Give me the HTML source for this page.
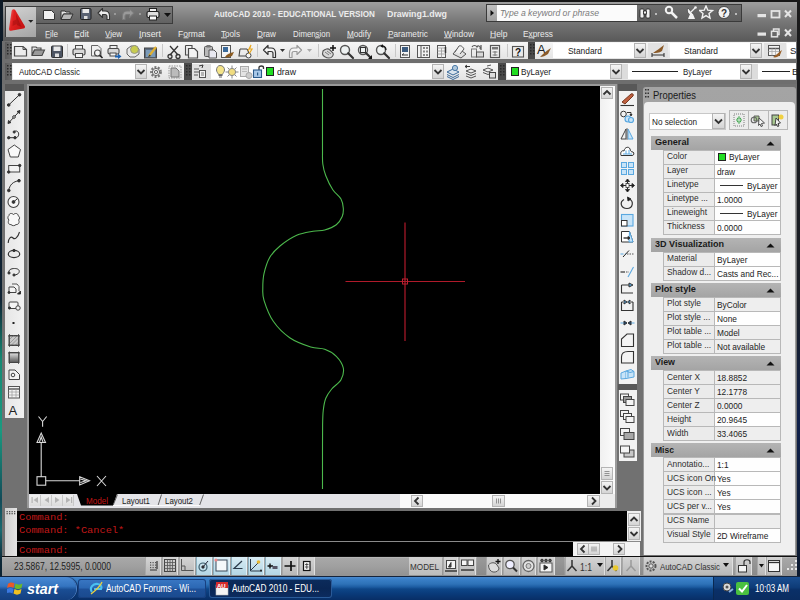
<!DOCTYPE html><html><head><meta charset="utf-8"><style>
*{margin:0;padding:0;box-sizing:border-box}
html,body{width:800px;height:600px;overflow:hidden;background:#6a6a6a;font-family:"Liberation Sans",sans-serif;font-size:11px;color:#000}
.a{position:absolute}
.t{white-space:nowrap;line-height:1}
.tb{background:linear-gradient(#f6f6f6,#e4e4e4)}
.grip{background:#5a5a5a}
</style></head><body><div class="a " style="left:0px;top:0px;width:800px;height:600px;background:#6a6a6a"></div>
<div class="a " style="left:0px;top:0px;width:800px;height:24px;background:linear-gradient(#4a4a4a,#5a5a5a)"></div>
<div class="a " style="left:0px;top:24px;width:800px;height:17px;background:linear-gradient(#5c5c5c,#4c4c4c)"></div>
<div class="a " style="left:0px;top:0px;width:800px;height:2px;background:#161616"></div>
<div class="a " style="left:0px;top:0px;width:2px;height:600px;background:#0f2233"></div>
<div class="a " style="left:0px;top:0px;width:800px;height:41px;background:linear-gradient(#161616 0,#161616 2px,#9e9e9e 2px,#8a8a8a 12px,#767676 22px,#6a6a6a 30px,#5a5a5a 41px)"></div>
<div class="a " style="left:0px;top:0px;width:2.5px;height:600px;background:linear-gradient(#0e1a26 0,#0f2233 300px,#168a74 360px,#1a9a80 430px,#124a58 500px,#1a6a70 530px,#0c2838 560px,#0a1a28 600px)"></div>
<div class="a " style="left:5px;top:6px;width:31px;height:31px;background:linear-gradient(160deg,#d2d2d2,#bcbcbc 50%,#a4a4a4);border:1px solid #3a3a3a;border-width:1px 0 0 1px"></div>
<svg class="a" style="left:0px;top:0px;" width="40" height="40" viewBox="0 0 40 40"><defs><linearGradient id="ra" x1="0" y1="0" x2="1" y2="0.3"><stop offset="0" stop-color="#f06a6a"/><stop offset="0.35" stop-color="#e02020"/><stop offset="1" stop-color="#c81414"/></linearGradient></defs><path d="M13.5 9.2 C12.5 9.2 12 10 11.6 11 L9 28.5 C8.8 30.5 9.8 31 11 30.8 L23.5 28.6 C25 28.3 25.5 27.2 24.6 25.8 L15.2 10 C14.8 9.4 14.2 9.2 13.5 9.2 Z" fill="url(#ra)"/><path d="M16 14 L21.5 27 L17 25 Z" fill="#a81010" opacity="0.8"/><path d="M13 21 L17.5 19 L18 23.5 L12.5 26 Z" fill="#b81515" opacity="0.9"/><path d="M28.2 20 H33.4 L30.8 22.8 Z" fill="#222"/></svg>
<div class="a " style="left:36px;top:6px;width:137px;height:18px;background:linear-gradient(#7a7a7a,#626262);border:1px solid #3c3c3c;border-left:none"></div>
<div class="a t" style="left:213.5px;top:10px;color:#ececec;font-size:9px;font-weight:bold;transform:scaleX(0.9035);transform-origin:0 0;">AutoCAD 2010 - EDUCATIONAL VERSION</div>
<div class="a t" style="left:387px;top:10px;color:#ececec;font-size:9px;font-weight:bold;transform:scaleX(0.9834);transform-origin:0 0;">Drawing1.dwg</div>
<div class="a " style="left:486px;top:4px;width:256px;height:18px;background:linear-gradient(#6e6e6e,#5e5e5e);border:1px solid #3a3a3a"></div>
<div class="a " style="left:487px;top:5px;width:10px;height:16px;background:linear-gradient(#c0c0c0,#9e9e9e)"></div>
<svg class="a" style="left:487px;top:5px;" width="10" height="16" viewBox="0 0 10 16"><path d="M3.5 5 L7 8 L3.5 11 Z" fill="#111"/></svg>
<div class="a " style="left:497px;top:5px;width:140px;height:16px;background:#fbfbfb"></div>
<div class="a t" style="left:500px;top:8px;color:#7a7a7a;font-style:italic;font-size:9.5px;transform:scaleX(0.9072);transform-origin:0 0;">Type a keyword or phrase</div>
<div class="a t" style="left:45px;top:30px;color:#eaeaea;font-size:9px;transform:scaleX(0.8956);transform-origin:0 0;">File</div>
<div class="a t" style="left:74px;top:30px;color:#eaeaea;font-size:9px;transform:scaleX(0.9668);transform-origin:0 0;">Edit</div>
<div class="a t" style="left:105px;top:30px;color:#eaeaea;font-size:9px;transform:scaleX(0.8781);transform-origin:0 0;">View</div>
<div class="a t" style="left:139px;top:30px;color:#eaeaea;font-size:9px;transform:scaleX(0.9771);transform-origin:0 0;">Insert</div>
<div class="a t" style="left:177.5px;top:30px;color:#eaeaea;font-size:9px;transform:scaleX(0.9468);transform-origin:0 0;">Format</div>
<div class="a t" style="left:221px;top:30px;color:#eaeaea;font-size:9px;transform:scaleX(0.9041);transform-origin:0 0;">Tools</div>
<div class="a t" style="left:257px;top:30px;color:#eaeaea;font-size:9px;transform:scaleX(0.9041);transform-origin:0 0;">Draw</div>
<div class="a t" style="left:293px;top:30px;color:#eaeaea;font-size:9px;transform:scaleX(0.8699);transform-origin:0 0;">Dimension</div>
<div class="a t" style="left:347px;top:30px;color:#eaeaea;font-size:9px;transform:scaleX(0.9051);transform-origin:0 0;">Modify</div>
<div class="a t" style="left:387.5px;top:30px;color:#eaeaea;font-size:9px;transform:scaleX(0.9192);transform-origin:0 0;">Parametric</div>
<div class="a t" style="left:443.5px;top:30px;color:#eaeaea;font-size:9px;transform:scaleX(0.9370);transform-origin:0 0;">Window</div>
<div class="a t" style="left:490px;top:30px;color:#eaeaea;font-size:9px;transform:scaleX(0.9451);transform-origin:0 0;">Help</div>
<div class="a t" style="left:522.5px;top:30px;color:#eaeaea;font-size:9px;transform:scaleX(0.9226);transform-origin:0 0;">Express</div>
<div class="a " style="left:2px;top:41px;width:795px;height:43px;background:#6e6e6e"></div>
<div class="a " style="left:5px;top:42px;width:7px;height:17px;background:linear-gradient(90deg,#5a5a5a,#6e6e6e)"></div>
<div class="a tb" style="left:12px;top:42px;width:516px;height:17px;"></div>
<div class="a " style="left:528px;top:42px;width:7px;height:17px;background:#4a4a4a"></div>
<div class="a tb" style="left:535px;top:42px;width:261px;height:17px;"></div>
<div class="a " style="left:553px;top:43px;width:93px;height:15px;background:#fff"></div>
<div class="a " style="left:634px;top:43px;width:12px;height:15px;background:linear-gradient(#f4f4f4,#d4d4d4);border:1px solid #b4b4b4"></div>
<svg class="a" style="left:634px;top:43px;" width="12" height="15" viewBox="0 0 12 15"><path d="M2.5 6.0 L6.0 9.5 L9.5 6.0" fill="none" stroke="#333" stroke-width="1.8"/></svg>
<div class="a t" style="left:568px;top:45.5px;font-size:9.5px;color:#222;transform:scaleX(0.8817);transform-origin:0 0;">Standard</div>
<div class="a " style="left:648px;top:43px;width:20px;height:15px;background:#e2e2e2"></div>
<div class="a " style="left:670px;top:43px;width:92px;height:15px;background:#fff"></div>
<div class="a " style="left:750px;top:43px;width:12px;height:15px;background:linear-gradient(#f4f4f4,#d4d4d4);border:1px solid #b4b4b4"></div>
<svg class="a" style="left:750px;top:43px;" width="12" height="15" viewBox="0 0 12 15"><path d="M2.5 6.0 L6.0 9.5 L9.5 6.0" fill="none" stroke="#333" stroke-width="1.8"/></svg>
<div class="a t" style="left:684px;top:45.5px;font-size:9.5px;color:#222;transform:scaleX(0.8817);transform-origin:0 0;">Standard</div>
<div class="a " style="left:764px;top:43px;width:22px;height:15px;background:#e2e2e2"></div>
<div class="a " style="left:787px;top:43px;width:9px;height:15px;background:#fff"></div>
<div class="a t" style="left:790px;top:45.5px;font-size:9.5px;color:#222;">S</div>
<div class="a " style="left:5px;top:63px;width:7px;height:17px;background:linear-gradient(90deg,#5a5a5a,#6e6e6e)"></div>
<div class="a tb" style="left:12px;top:63px;width:135px;height:17px;"></div>
<div class="a " style="left:13px;top:64px;width:122px;height:15px;background:#fff"></div>
<div class="a " style="left:135px;top:64px;width:12px;height:15px;background:linear-gradient(#f4f4f4,#d4d4d4);border:1px solid #b4b4b4"></div>
<svg class="a" style="left:135px;top:64px;" width="12" height="15" viewBox="0 0 12 15"><path d="M2.5 6.0 L6.0 9.5 L9.5 6.0" fill="none" stroke="#333" stroke-width="1.8"/></svg>
<div class="a t" style="left:19px;top:66.5px;font-size:9.5px;color:#222;transform:scaleX(0.8372);transform-origin:0 0;">AutoCAD Classic</div>
<div class="a tb" style="left:147px;top:63px;width:37px;height:17px;"></div>
<div class="a " style="left:184px;top:63px;width:8px;height:17px;background:#4a4a4a"></div>
<div class="a tb" style="left:192px;top:63px;width:306px;height:17px;"></div>
<div class="a " style="left:192px;top:64px;width:19px;height:15px;background:#e0e0e0"></div>
<div class="a " style="left:211px;top:64px;width:233px;height:15px;background:#fff"></div>
<div class="a " style="left:432px;top:64px;width:12px;height:15px;background:linear-gradient(#f4f4f4,#d4d4d4);border:1px solid #b4b4b4"></div>
<svg class="a" style="left:432px;top:64px;" width="12" height="15" viewBox="0 0 12 15"><path d="M2.5 6.0 L6.0 9.5 L9.5 6.0" fill="none" stroke="#333" stroke-width="1.8"/></svg>
<div class="a " style="left:265.5px;top:67px;width:8px;height:9px;background:#22dd22;border:1px solid #222"></div>
<div class="a t" style="left:277px;top:66.5px;font-size:9.5px;color:#222;transform:scaleX(0.9226);transform-origin:0 0;">draw</div>
<div class="a " style="left:498px;top:63px;width:8px;height:17px;background:#4a4a4a"></div>
<div class="a tb" style="left:506px;top:63px;width:290px;height:17px;"></div>
<div class="a " style="left:507px;top:64px;width:115px;height:15px;background:#fff"></div>
<div class="a " style="left:610px;top:64px;width:12px;height:15px;background:linear-gradient(#f4f4f4,#d4d4d4);border:1px solid #b4b4b4"></div>
<svg class="a" style="left:610px;top:64px;" width="12" height="15" viewBox="0 0 12 15"><path d="M2.5 6.0 L6.0 9.5 L9.5 6.0" fill="none" stroke="#333" stroke-width="1.8"/></svg>
<div class="a " style="left:511px;top:67px;width:8px;height:9px;background:#22dd22;border:1px solid #222"></div>
<div class="a t" style="left:521px;top:66.5px;font-size:9.5px;color:#222;transform:scaleX(0.8606);transform-origin:0 0;">ByLayer</div>
<div class="a " style="left:622px;top:64px;width:6px;height:15px;background:#dcdcdc"></div>
<div class="a " style="left:628px;top:64px;width:124px;height:15px;background:#fff"></div>
<div class="a " style="left:740px;top:64px;width:12px;height:15px;background:linear-gradient(#f4f4f4,#d4d4d4);border:1px solid #b4b4b4"></div>
<svg class="a" style="left:740px;top:64px;" width="12" height="15" viewBox="0 0 12 15"><path d="M2.5 6.0 L6.0 9.5 L9.5 6.0" fill="none" stroke="#333" stroke-width="1.8"/></svg>
<div class="a " style="left:632px;top:71px;width:46px;height:1px;background:#222"></div>
<div class="a t" style="left:683px;top:66.5px;font-size:9.5px;color:#222;transform:scaleX(0.8319);transform-origin:0 0;">ByLayer</div>
<div class="a " style="left:752px;top:64px;width:6px;height:15px;background:#dcdcdc"></div>
<div class="a " style="left:758px;top:64px;width:38px;height:15px;background:#fff"></div>
<div class="a " style="left:762px;top:71px;width:28px;height:1px;background:#222"></div>
<div class="a t" style="left:792px;top:66.5px;font-size:9.5px;color:#222;">B</div>
<div class="a " style="left:2px;top:84px;width:795px;height:472px;background:#717171"></div>
<div class="a " style="left:27px;top:84px;width:590px;height:426px;background:#9a9a9a"></div>
<div class="a " style="left:29px;top:86px;width:571px;height:408px;background:#000"></div>
<div class="a " style="left:600px;top:86px;width:15px;height:408px;background:linear-gradient(90deg,#f0f0f0,#fcfcfc)"></div>
<div class="a " style="left:601px;top:87px;width:12px;height:12px;background:linear-gradient(#f4f4f4,#d4d4d4);border:1px solid #b4b4b4"></div>
<svg class="a" style="left:601px;top:87px;" width="12" height="12" viewBox="0 0 12 12"><path d="M2.5 7.5 L6.0 4.0 L9.5 7.5" fill="none" stroke="#333" stroke-width="1.8"/></svg>
<div class="a " style="left:601px;top:467px;width:12px;height:13px;background:linear-gradient(#f4f4f4,#d4d4d4);border:1px solid #b4b4b4"></div>
<svg class="a" style="left:601px;top:467px;" width="12" height="13" viewBox="0 0 12 13"><path d="M3.5 4.5 H8.5 M3.5 6.5 H8.5 M3.5 8.5 H8.5" stroke="#888" stroke-width="0.9"/></svg>
<div class="a " style="left:601px;top:481px;width:12px;height:13px;background:linear-gradient(#f4f4f4,#d4d4d4);border:1px solid #b4b4b4"></div>
<svg class="a" style="left:601px;top:481px;" width="12" height="13" viewBox="0 0 12 13"><path d="M2.5 5.0 L6.0 8.5 L9.5 5.0" fill="none" stroke="#333" stroke-width="1.8"/></svg>
<div class="a " style="left:29px;top:494px;width:586px;height:14px;background:#e4e4e8"></div>
<div class="a " style="left:400px;top:494px;width:200px;height:14px;background:#fafafa"></div>
<div class="a " style="left:411px;top:495px;width:12px;height:12px;background:linear-gradient(#f4f4f4,#d4d4d4);border:1px solid #b4b4b4"></div>
<svg class="a" style="left:411px;top:495px;" width="12" height="12" viewBox="0 0 12 12"><path d="M7.5 2.5 L4 6 L7.5 9.5" fill="none" stroke="#333" stroke-width="1.8"/></svg>
<div class="a " style="left:492px;top:495px;width:13px;height:12px;background:linear-gradient(#f4f4f4,#d4d4d4);border:1px solid #b4b4b4"></div>
<svg class="a" style="left:492px;top:495px;" width="13" height="12" viewBox="0 0 13 12"><path d="M4.5 3.5 V8.5 M6.5 3.5 V8.5 M8.5 3.5 V8.5" stroke="#888" stroke-width="0.9"/></svg>
<div class="a " style="left:587px;top:495px;width:13px;height:12px;background:linear-gradient(#f4f4f4,#d4d4d4);border:1px solid #b4b4b4"></div>
<svg class="a" style="left:587px;top:495px;" width="13" height="12" viewBox="0 0 13 12"><path d="M5 2.5 L8.5 6 L5 9.5" fill="none" stroke="#333" stroke-width="1.8"/></svg>
<div class="a " style="left:600px;top:494px;width:15px;height:14px;background:#ececec"></div>
<div class="a " style="left:2px;top:508px;width:795px;height:48px;background:#717171"></div>
<div class="a " style="left:5px;top:84px;width:19px;height:7px;background:#585858"></div>
<div class="a " style="left:5px;top:91px;width:19px;height:327px;background:linear-gradient(90deg,#e6e6e6,#f2f2f2)"></div>
<div class="a " style="left:618px;top:84px;width:19px;height:7px;background:#585858"></div>
<div class="a " style="left:619px;top:91px;width:18px;height:292.5px;background:#f2f2f2"></div>
<div class="a " style="left:618px;top:383.5px;width:19px;height:6px;background:#585858"></div>
<div class="a " style="left:619px;top:389.5px;width:18px;height:71px;background:#f2f2f2"></div>
<div class="a " style="left:643px;top:87px;width:153px;height:468px;background:linear-gradient(#a4a4a4,#969696);border-radius:3px 3px 0 0"></div>
<div class="a " style="left:644px;top:102px;width:151px;height:453px;background:#efefef;border-radius:4px 4px 0 0"></div>
<svg class="a" style="left:645px;top:89px;" width="4" height="9" viewBox="0 0 4 9"><g fill="#333"><rect x="0" y="0" width="1.5" height="1.5"/><rect x="2.5" y="0" width="1.5" height="1.5"/><rect x="0" y="3.5" width="1.5" height="1.5"/><rect x="2.5" y="3.5" width="1.5" height="1.5"/><rect x="0" y="7" width="1.5" height="1.5"/><rect x="2.5" y="7" width="1.5" height="1.5"/></g></svg>
<div class="a t" style="left:653px;top:90.5px;font-size:10px;color:#1a1a1a;transform:scaleX(0.9434);transform-origin:0 0;">Properties</div>
<div class="a " style="left:649px;top:112.5px;width:77px;height:17px;background:#fff;border:1px solid #c8c8c8"></div>
<div class="a t" style="left:652px;top:116.5px;font-size:9.5px;color:#222;transform:scaleX(0.8607);transform-origin:0 0;">No selection</div>
<div class="a " style="left:712px;top:113px;width:13px;height:16px;background:linear-gradient(#f4f4f4,#d4d4d4);border:1px solid #b4b4b4"></div>
<svg class="a" style="left:712px;top:113px;" width="13" height="16" viewBox="0 0 13 16"><path d="M3.0 6.5 L6.5 10.0 L10.0 6.5" fill="none" stroke="#333" stroke-width="1.8"/></svg>
<div class="a " style="left:729px;top:110px;width:59px;height:20px;background:#ececec;border:1px solid #b8b8b8"></div>
<div class="a " style="left:748px;top:110px;width:1px;height:20px;background:#b8b8b8"></div>
<div class="a " style="left:768px;top:110px;width:1px;height:20px;background:#b8b8b8"></div>
<div class="a " style="left:651px;top:135.5px;width:130px;height:14px;background:linear-gradient(#b4b4b4,#a4a4a4)"></div>
<div class="a t" style="left:654.5px;top:136.7px;font-size:9.5px;font-weight:bold;color:#1a1a1a;transform:scaleX(0.9607);transform-origin:0 0;">General</div>
<svg class="a" style="left:766px;top:140.5px;" width="9" height="5" viewBox="0 0 9 5"><path d="M0.5 4.5 L4.5 0.5 L8.5 4.5 Z" fill="#111"/></svg>
<div class="a " style="left:651px;top:135.5px;width:130px;height:14px;background:linear-gradient(#b4b4b4,#a4a4a4)"></div>
<div class="a t" style="left:654.5px;top:136.7px;font-size:9.5px;font-weight:bold;color:#1a1a1a;transform:scaleX(0.9607);transform-origin:0 0;">General</div>
<svg class="a" style="left:766px;top:140.5px;" width="9" height="5" viewBox="0 0 9 5"><path d="M0.5 4.5 L4.5 0.5 L8.5 4.5 Z" fill="#111"/></svg>
<div class="a " style="left:663px;top:149.5px;width:118px;height:15.05px;background:#b8b8b8"></div>
<div class="a " style="left:664px;top:150.5px;width:50px;height:13.05px;background:#ebebeb"></div>
<div class="a " style="left:715px;top:150.5px;width:65px;height:13.05px;background:#fefefe"></div>
<div class="a t" style="left:667px;top:151.0px;font-size:9.5px;color:#2e2e2e;transform:scaleX(0.88);transform-origin:0 0;">Color</div>
<div class="a " style="left:717.5px;top:152.5px;width:8px;height:8px;background:#22dd22;border:1px solid #222"></div>
<div class="a t" style="left:729px;top:152.3px;font-size:9.5px;color:#222;transform:scaleX(0.875);transform-origin:0 0;">ByLayer</div>
<div class="a " style="left:663px;top:163.55px;width:118px;height:15.05px;background:#b8b8b8"></div>
<div class="a " style="left:664px;top:164.55px;width:50px;height:13.05px;background:#ebebeb"></div>
<div class="a " style="left:715px;top:164.55px;width:65px;height:13.05px;background:#fefefe"></div>
<div class="a t" style="left:667px;top:165.05px;font-size:9.5px;color:#2e2e2e;transform:scaleX(0.88);transform-origin:0 0;">Layer</div>
<div class="a t" style="left:716.5px;top:166.55px;font-size:9.5px;color:#222;transform:scaleX(0.875);transform-origin:0 0;">draw</div>
<div class="a " style="left:663px;top:177.60000000000002px;width:118px;height:15.05px;background:#b8b8b8"></div>
<div class="a " style="left:664px;top:178.60000000000002px;width:50px;height:13.05px;background:#ebebeb"></div>
<div class="a " style="left:715px;top:178.60000000000002px;width:65px;height:13.05px;background:#fefefe"></div>
<div class="a t" style="left:667px;top:179.10000000000002px;font-size:9.5px;color:#2e2e2e;transform:scaleX(0.88);transform-origin:0 0;">Linetype</div>
<div class="a " style="left:719.5px;top:184.60000000000002px;width:23px;height:1px;background:#333"></div>
<div class="a t" style="left:747px;top:180.60000000000002px;font-size:9.5px;color:#222;transform:scaleX(0.875);transform-origin:0 0;">ByLayer</div>
<div class="a " style="left:663px;top:191.65000000000003px;width:118px;height:15.05px;background:#b8b8b8"></div>
<div class="a " style="left:664px;top:192.65000000000003px;width:50px;height:13.05px;background:#ebebeb"></div>
<div class="a " style="left:715px;top:192.65000000000003px;width:65px;height:13.05px;background:#fefefe"></div>
<div class="a t" style="left:667px;top:193.15000000000003px;font-size:9.5px;color:#2e2e2e;transform:scaleX(0.88);transform-origin:0 0;">Linetype ...</div>
<div class="a t" style="left:716.5px;top:194.65000000000003px;font-size:9.5px;color:#222;transform:scaleX(0.875);transform-origin:0 0;">1.0000</div>
<div class="a " style="left:663px;top:205.70000000000005px;width:118px;height:15.05px;background:#b8b8b8"></div>
<div class="a " style="left:664px;top:206.70000000000005px;width:50px;height:13.05px;background:#ebebeb"></div>
<div class="a " style="left:715px;top:206.70000000000005px;width:65px;height:13.05px;background:#fefefe"></div>
<div class="a t" style="left:667px;top:207.20000000000005px;font-size:9.5px;color:#2e2e2e;transform:scaleX(0.88);transform-origin:0 0;">Lineweight</div>
<div class="a " style="left:719.5px;top:212.70000000000005px;width:23px;height:1px;background:#333"></div>
<div class="a t" style="left:747px;top:208.70000000000005px;font-size:9.5px;color:#222;transform:scaleX(0.875);transform-origin:0 0;">ByLayer</div>
<div class="a " style="left:663px;top:219.75000000000006px;width:118px;height:15.05px;background:#b8b8b8"></div>
<div class="a " style="left:664px;top:220.75000000000006px;width:50px;height:13.05px;background:#ebebeb"></div>
<div class="a " style="left:715px;top:220.75000000000006px;width:65px;height:13.05px;background:#fefefe"></div>
<div class="a t" style="left:667px;top:221.25000000000006px;font-size:9.5px;color:#2e2e2e;transform:scaleX(0.88);transform-origin:0 0;">Thickness</div>
<div class="a t" style="left:716.5px;top:222.75000000000006px;font-size:9.5px;color:#222;transform:scaleX(0.875);transform-origin:0 0;">0.0000</div>
<div class="a " style="left:651px;top:237.5px;width:130px;height:14px;background:linear-gradient(#b4b4b4,#a4a4a4)"></div>
<div class="a t" style="left:654.5px;top:238.7px;font-size:9.5px;font-weight:bold;color:#1a1a1a;transform:scaleX(0.9493);transform-origin:0 0;">3D Visualization</div>
<svg class="a" style="left:766px;top:242.5px;" width="9" height="5" viewBox="0 0 9 5"><path d="M0.5 4.5 L4.5 0.5 L8.5 4.5 Z" fill="#111"/></svg>
<div class="a " style="left:663px;top:251.5px;width:118px;height:15.05px;background:#b8b8b8"></div>
<div class="a " style="left:664px;top:252.5px;width:50px;height:13.05px;background:#ebebeb"></div>
<div class="a " style="left:715px;top:252.5px;width:65px;height:13.05px;background:#fefefe"></div>
<div class="a t" style="left:667px;top:253.0px;font-size:9.5px;color:#2e2e2e;transform:scaleX(0.88);transform-origin:0 0;">Material</div>
<div class="a t" style="left:716.5px;top:254.5px;font-size:9.5px;color:#222;transform:scaleX(0.875);transform-origin:0 0;">ByLayer</div>
<div class="a " style="left:663px;top:265.55px;width:118px;height:15.05px;background:#b8b8b8"></div>
<div class="a " style="left:664px;top:266.55px;width:50px;height:13.05px;background:#ebebeb"></div>
<div class="a " style="left:715px;top:266.55px;width:65px;height:13.05px;background:#fefefe"></div>
<div class="a t" style="left:667px;top:267.05px;font-size:9.5px;color:#2e2e2e;transform:scaleX(0.88);transform-origin:0 0;">Shadow d...</div>
<div class="a t" style="left:716.5px;top:268.55px;font-size:9.5px;color:#222;transform:scaleX(0.875);transform-origin:0 0;">Casts and Rec...</div>
<div class="a " style="left:651px;top:282.5px;width:130px;height:14px;background:linear-gradient(#b4b4b4,#a4a4a4)"></div>
<div class="a t" style="left:654.5px;top:283.7px;font-size:9.5px;font-weight:bold;color:#1a1a1a;transform:scaleX(0.9704);transform-origin:0 0;">Plot style</div>
<svg class="a" style="left:766px;top:287.5px;" width="9" height="5" viewBox="0 0 9 5"><path d="M0.5 4.5 L4.5 0.5 L8.5 4.5 Z" fill="#111"/></svg>
<div class="a " style="left:663px;top:296.5px;width:118px;height:15.05px;background:#b8b8b8"></div>
<div class="a " style="left:664px;top:297.5px;width:50px;height:13.05px;background:#ebebeb"></div>
<div class="a " style="left:715px;top:297.5px;width:65px;height:13.05px;background:#eeeeee"></div>
<div class="a t" style="left:667px;top:298.0px;font-size:9.5px;color:#2e2e2e;transform:scaleX(0.88);transform-origin:0 0;">Plot style</div>
<div class="a t" style="left:716.5px;top:299.5px;font-size:9.5px;color:#222;transform:scaleX(0.875);transform-origin:0 0;">ByColor</div>
<div class="a " style="left:663px;top:310.55px;width:118px;height:15.05px;background:#b8b8b8"></div>
<div class="a " style="left:664px;top:311.55px;width:50px;height:13.05px;background:#ebebeb"></div>
<div class="a " style="left:715px;top:311.55px;width:65px;height:13.05px;background:#fefefe"></div>
<div class="a t" style="left:667px;top:312.05px;font-size:9.5px;color:#2e2e2e;transform:scaleX(0.88);transform-origin:0 0;">Plot style ...</div>
<div class="a t" style="left:716.5px;top:313.55px;font-size:9.5px;color:#222;transform:scaleX(0.875);transform-origin:0 0;">None</div>
<div class="a " style="left:663px;top:324.6px;width:118px;height:15.05px;background:#b8b8b8"></div>
<div class="a " style="left:664px;top:325.6px;width:50px;height:13.05px;background:#ebebeb"></div>
<div class="a " style="left:715px;top:325.6px;width:65px;height:13.05px;background:#eeeeee"></div>
<div class="a t" style="left:667px;top:326.1px;font-size:9.5px;color:#2e2e2e;transform:scaleX(0.88);transform-origin:0 0;">Plot table ...</div>
<div class="a t" style="left:716.5px;top:327.6px;font-size:9.5px;color:#222;transform:scaleX(0.875);transform-origin:0 0;">Model</div>
<div class="a " style="left:663px;top:338.65000000000003px;width:118px;height:15.05px;background:#b8b8b8"></div>
<div class="a " style="left:664px;top:339.65000000000003px;width:50px;height:13.05px;background:#ebebeb"></div>
<div class="a " style="left:715px;top:339.65000000000003px;width:65px;height:13.05px;background:#eeeeee"></div>
<div class="a t" style="left:667px;top:340.15000000000003px;font-size:9.5px;color:#2e2e2e;transform:scaleX(0.88);transform-origin:0 0;">Plot table ...</div>
<div class="a t" style="left:716.5px;top:341.65000000000003px;font-size:9.5px;color:#222;transform:scaleX(0.875);transform-origin:0 0;">Not available</div>
<div class="a " style="left:651px;top:356px;width:130px;height:14px;background:linear-gradient(#b4b4b4,#a4a4a4)"></div>
<div class="a t" style="left:654.5px;top:357.2px;font-size:9.5px;font-weight:bold;color:#1a1a1a;transform:scaleX(0.9309);transform-origin:0 0;">View</div>
<svg class="a" style="left:766px;top:361px;" width="9" height="5" viewBox="0 0 9 5"><path d="M0.5 4.5 L4.5 0.5 L8.5 4.5 Z" fill="#111"/></svg>
<div class="a " style="left:663px;top:370px;width:118px;height:15.1px;background:#b8b8b8"></div>
<div class="a " style="left:664px;top:371px;width:50px;height:13.1px;background:#ebebeb"></div>
<div class="a " style="left:715px;top:371px;width:65px;height:13.1px;background:#eeeeee"></div>
<div class="a t" style="left:667px;top:371.5px;font-size:9.5px;color:#2e2e2e;transform:scaleX(0.88);transform-origin:0 0;">Center X</div>
<div class="a t" style="left:716.5px;top:373px;font-size:9.5px;color:#222;transform:scaleX(0.875);transform-origin:0 0;">18.8852</div>
<div class="a " style="left:663px;top:384.1px;width:118px;height:15.1px;background:#b8b8b8"></div>
<div class="a " style="left:664px;top:385.1px;width:50px;height:13.1px;background:#ebebeb"></div>
<div class="a " style="left:715px;top:385.1px;width:65px;height:13.1px;background:#eeeeee"></div>
<div class="a t" style="left:667px;top:385.6px;font-size:9.5px;color:#2e2e2e;transform:scaleX(0.88);transform-origin:0 0;">Center Y</div>
<div class="a t" style="left:716.5px;top:387.1px;font-size:9.5px;color:#222;transform:scaleX(0.875);transform-origin:0 0;">12.1778</div>
<div class="a " style="left:663px;top:398.20000000000005px;width:118px;height:15.1px;background:#b8b8b8"></div>
<div class="a " style="left:664px;top:399.20000000000005px;width:50px;height:13.1px;background:#ebebeb"></div>
<div class="a " style="left:715px;top:399.20000000000005px;width:65px;height:13.1px;background:#eeeeee"></div>
<div class="a t" style="left:667px;top:399.70000000000005px;font-size:9.5px;color:#2e2e2e;transform:scaleX(0.88);transform-origin:0 0;">Center Z</div>
<div class="a t" style="left:716.5px;top:401.20000000000005px;font-size:9.5px;color:#222;transform:scaleX(0.875);transform-origin:0 0;">0.0000</div>
<div class="a " style="left:663px;top:412.30000000000007px;width:118px;height:15.1px;background:#b8b8b8"></div>
<div class="a " style="left:664px;top:413.30000000000007px;width:50px;height:13.1px;background:#ebebeb"></div>
<div class="a " style="left:715px;top:413.30000000000007px;width:65px;height:13.1px;background:#fefefe"></div>
<div class="a t" style="left:667px;top:413.80000000000007px;font-size:9.5px;color:#2e2e2e;transform:scaleX(0.88);transform-origin:0 0;">Height</div>
<div class="a t" style="left:716.5px;top:415.30000000000007px;font-size:9.5px;color:#222;transform:scaleX(0.875);transform-origin:0 0;">20.9645</div>
<div class="a " style="left:663px;top:426.4000000000001px;width:118px;height:15.1px;background:#b8b8b8"></div>
<div class="a " style="left:664px;top:427.4000000000001px;width:50px;height:13.1px;background:#ebebeb"></div>
<div class="a " style="left:715px;top:427.4000000000001px;width:65px;height:13.1px;background:#eeeeee"></div>
<div class="a t" style="left:667px;top:427.9000000000001px;font-size:9.5px;color:#2e2e2e;transform:scaleX(0.88);transform-origin:0 0;">Width</div>
<div class="a t" style="left:716.5px;top:429.4000000000001px;font-size:9.5px;color:#222;transform:scaleX(0.875);transform-origin:0 0;">33.4065</div>
<div class="a " style="left:651px;top:443.3px;width:130px;height:14px;background:linear-gradient(#b4b4b4,#a4a4a4)"></div>
<div class="a t" style="left:654.5px;top:444.5px;font-size:9.5px;font-weight:bold;color:#1a1a1a;transform:scaleX(0.8994);transform-origin:0 0;">Misc</div>
<svg class="a" style="left:766px;top:448.3px;" width="9" height="5" viewBox="0 0 9 5"><path d="M0.5 4.5 L4.5 0.5 L8.5 4.5 Z" fill="#111"/></svg>
<div class="a " style="left:663px;top:457.3px;width:118px;height:15.05px;background:#b8b8b8"></div>
<div class="a " style="left:664px;top:458.3px;width:50px;height:13.05px;background:#ebebeb"></div>
<div class="a " style="left:715px;top:458.3px;width:65px;height:13.05px;background:#fefefe"></div>
<div class="a t" style="left:667px;top:458.8px;font-size:9.5px;color:#2e2e2e;transform:scaleX(0.88);transform-origin:0 0;">Annotatio...</div>
<div class="a t" style="left:716.5px;top:460.3px;font-size:9.5px;color:#222;transform:scaleX(0.875);transform-origin:0 0;">1:1</div>
<div class="a " style="left:663px;top:471.35px;width:118px;height:15.05px;background:#b8b8b8"></div>
<div class="a " style="left:664px;top:472.35px;width:50px;height:13.05px;background:#ebebeb"></div>
<div class="a " style="left:715px;top:472.35px;width:65px;height:13.05px;background:#fefefe"></div>
<div class="a t" style="left:667px;top:472.85px;font-size:9.5px;color:#2e2e2e;transform:scaleX(0.88);transform-origin:0 0;">UCS icon On</div>
<div class="a t" style="left:716.5px;top:474.35px;font-size:9.5px;color:#222;transform:scaleX(0.875);transform-origin:0 0;">Yes</div>
<div class="a " style="left:663px;top:485.40000000000003px;width:118px;height:15.05px;background:#b8b8b8"></div>
<div class="a " style="left:664px;top:486.40000000000003px;width:50px;height:13.05px;background:#ebebeb"></div>
<div class="a " style="left:715px;top:486.40000000000003px;width:65px;height:13.05px;background:#fefefe"></div>
<div class="a t" style="left:667px;top:486.90000000000003px;font-size:9.5px;color:#2e2e2e;transform:scaleX(0.88);transform-origin:0 0;">UCS icon ...</div>
<div class="a t" style="left:716.5px;top:488.40000000000003px;font-size:9.5px;color:#222;transform:scaleX(0.875);transform-origin:0 0;">Yes</div>
<div class="a " style="left:663px;top:499.45000000000005px;width:118px;height:15.05px;background:#b8b8b8"></div>
<div class="a " style="left:664px;top:500.45000000000005px;width:50px;height:13.05px;background:#ebebeb"></div>
<div class="a " style="left:715px;top:500.45000000000005px;width:65px;height:13.05px;background:#fefefe"></div>
<div class="a t" style="left:667px;top:500.95000000000005px;font-size:9.5px;color:#2e2e2e;transform:scaleX(0.88);transform-origin:0 0;">UCS per v...</div>
<div class="a t" style="left:716.5px;top:502.45000000000005px;font-size:9.5px;color:#222;transform:scaleX(0.875);transform-origin:0 0;">Yes</div>
<div class="a " style="left:663px;top:513.5px;width:118px;height:15.05px;background:#b8b8b8"></div>
<div class="a " style="left:664px;top:514.5px;width:50px;height:13.05px;background:#ebebeb"></div>
<div class="a " style="left:715px;top:514.5px;width:65px;height:13.05px;background:#eeeeee"></div>
<div class="a t" style="left:667px;top:515.0px;font-size:9.5px;color:#2e2e2e;transform:scaleX(0.88);transform-origin:0 0;">UCS Name</div>
<div class="a " style="left:663px;top:527.55px;width:118px;height:15.05px;background:#b8b8b8"></div>
<div class="a " style="left:664px;top:528.55px;width:50px;height:13.05px;background:#ebebeb"></div>
<div class="a " style="left:715px;top:528.55px;width:65px;height:13.05px;background:#fefefe"></div>
<div class="a t" style="left:667px;top:529.05px;font-size:9.5px;color:#2e2e2e;transform:scaleX(0.88);transform-origin:0 0;">Visual Style</div>
<div class="a t" style="left:716.5px;top:530.55px;font-size:9.5px;color:#222;transform:scaleX(0.875);transform-origin:0 0;">2D Wireframe</div>
<div class="a " style="left:5px;top:508px;width:12px;height:48px;background:linear-gradient(90deg,#cfcfcf,#e4e4e4)"></div>
<svg class="a" style="left:5px;top:510px;" width="12" height="5" viewBox="0 0 12 5"><g fill="#555"><rect x="1.5" y="1" width="1.3" height="1.3"/><rect x="4" y="1" width="1.3" height="1.3"/><rect x="6.5" y="1" width="1.3" height="1.3"/><rect x="9" y="1" width="1.3" height="1.3"/><rect x="1.5" y="3" width="1.3" height="1.3"/><rect x="4" y="3" width="1.3" height="1.3"/><rect x="6.5" y="3" width="1.3" height="1.3"/><rect x="9" y="3" width="1.3" height="1.3"/></g></svg>
<div class="a " style="left:17px;top:511px;width:610px;height:30px;background:#000"></div>
<div class="a " style="left:17px;top:541px;width:623px;height:1px;background:#8a8a8a"></div>
<div class="a " style="left:17px;top:542px;width:556px;height:14px;background:#000"></div>
<div class="a " style="left:573px;top:542px;width:67px;height:14px;background:#f4f4f4"></div>
<div class="a " style="left:627px;top:511px;width:14px;height:30px;background:#efefef"></div>
<div class="a " style="left:628px;top:513px;width:12px;height:13px;background:linear-gradient(#f4f4f4,#d4d4d4);border:1px solid #b4b4b4"></div>
<svg class="a" style="left:628px;top:513px;" width="12" height="13" viewBox="0 0 12 13"><path d="M2.5 8.0 L6.0 4.5 L9.5 8.0" fill="none" stroke="#333" stroke-width="1.8"/></svg>
<div class="a " style="left:628px;top:527px;width:12px;height:13px;background:linear-gradient(#f4f4f4,#d4d4d4);border:1px solid #b4b4b4"></div>
<svg class="a" style="left:628px;top:527px;" width="12" height="13" viewBox="0 0 12 13"><path d="M2.5 5.0 L6.0 8.5 L9.5 5.0" fill="none" stroke="#333" stroke-width="1.8"/></svg>
<div class="a " style="left:577px;top:543px;width:12px;height:12px;background:linear-gradient(#f4f4f4,#d4d4d4);border:1px solid #b4b4b4"></div>
<svg class="a" style="left:577px;top:543px;" width="12" height="12" viewBox="0 0 12 12"><path d="M7.5 2.5 L4 6 L7.5 9.5" fill="none" stroke="#333" stroke-width="1.8"/></svg>
<div class="a " style="left:588px;top:543px;width:12px;height:12px;background:linear-gradient(#f4f4f4,#d4d4d4);border:1px solid #b4b4b4"></div>
<svg class="a" style="left:588px;top:543px;" width="12" height="12" viewBox="0 0 12 12"><path d="M4 3.5 V8.5 M6 3.5 V8.5 M8 3.5 V8.5" stroke="#888" stroke-width="0.9"/></svg>
<div class="a " style="left:613px;top:543px;width:12px;height:12px;background:linear-gradient(#f4f4f4,#d4d4d4);border:1px solid #b4b4b4"></div>
<svg class="a" style="left:613px;top:543px;" width="12" height="12" viewBox="0 0 12 12"><path d="M5 2.5 L8.5 6 L5 9.5" fill="none" stroke="#333" stroke-width="1.8"/></svg>
<div class="a t" style="left:18.5px;top:513px;font-family:'Liberation Mono',monospace;font-size:9.6px;color:#c01818;transform:scaleX(1.075);transform-origin:0 0;">Command:</div>
<div class="a t" style="left:18.5px;top:526px;font-family:'Liberation Mono',monospace;font-size:9.6px;color:#c01818;transform:scaleX(1.075);transform-origin:0 0;">Command: *Cancel*</div>
<div class="a t" style="left:18.5px;top:546.3px;font-family:'Liberation Mono',monospace;font-size:9.6px;color:#c01818;transform:scaleX(1.075);transform-origin:0 0;">Command:</div>
<div class="a " style="left:2px;top:556px;width:795px;height:20px;background:linear-gradient(#101010 0,#101010 0.5px,#c4c4c4 1px,#a8a8a8 2px,#a0a0a0 50%,#929292)"></div>
<div class="a t" style="left:14px;top:562px;font-size:10px;color:#222;transform:scaleX(0.85);transform-origin:0 0;">23.5867, 12.5995, 0.0000</div>
<svg class="a" style="left:0px;top:0px;" width="800" height="600" viewBox="0 0 800 600"><path d="M322.5 89 C322.50 94.17 322.50 109.83 322.5 120 C322.50 130.17 322.45 142.67 322.5 150 C322.55 157.33 322.25 159.72 322.8 164 C323.35 168.28 324.13 171.42 325.8 175.7 C327.47 179.98 330.27 185.82 332.8 189.7 C335.33 193.58 339.25 195.90 341 199 C342.75 202.10 343.10 205.38 343.3 208.3 C343.50 211.22 343.37 213.77 342.2 216.5 C341.03 219.23 339.22 222.45 336.3 224.7 C333.38 226.95 328.58 228.92 324.7 230 C320.82 231.08 317.67 230.33 313 231.2 C308.33 232.07 302.15 232.78 296.7 235.2 C291.25 237.62 284.78 242.02 280.3 245.7 C275.82 249.38 272.52 252.63 269.8 257.3 C267.08 261.97 265.17 268.58 264 273.7 C262.83 278.82 262.80 283.57 262.8 288 C262.80 292.43 262.25 294.75 264 300.3 C265.75 305.85 269.02 315.07 273.3 321.3 C277.58 327.53 283.47 333.42 289.7 337.7 C295.93 341.98 304.87 345.07 310.7 347 C316.53 348.93 320.43 347.75 324.7 349.3 C328.97 350.85 333.20 353.18 336.3 356.3 C339.40 359.42 342.52 364.10 343.3 368 C344.08 371.90 342.93 376.20 341 379.7 C339.07 383.20 334.23 385.90 331.7 389 C329.17 392.10 327.20 394.80 325.8 398.3 C324.40 401.80 323.83 405.55 323.3 410 C322.77 414.45 322.73 416.67 322.6 425 C322.47 433.33 322.52 449.33 322.5 460 C322.48 470.67 322.50 484.17 322.5 489" fill="none" stroke="#4cb84c" stroke-width="1.1"/><path d="M405 222.5 V341 M345.5 281.5 H465" stroke="#b01a2a" stroke-width="1.2" fill="none"/><rect x="402.5" y="279" width="5" height="5" fill="none" stroke="#c02030" stroke-width="1"/><g stroke="#d8d8d8" stroke-width="1.1" fill="none"><path d="M41.2 442.5 V476.7 M45.7 480.7 H79.7"/><rect x="37" y="476.7" width="8.7" height="8.5"/><path d="M37 442.5 L41.2 433 L45.5 442.5 Z M39.5 442 L41.2 437 L43 442"/><path d="M79.7 476.7 L89.5 480.7 L79.7 485 Z M80.5 479 L86 480.7 L80.5 482.5"/><path d="M38.5 416.5 L42.6 421.5 L46.7 416.5 M42.6 421.5 V426.7"/><path d="M97 476 L106 486 M106 476 L97 486"/></g></svg>
<svg class="a" style="left:12.5px;top:42.5px;" width="16" height="16" viewBox="0 0 16 16"><path d="M1.5 3.5 H10 L13.5 6.5 V13 H1.5 Z" fill="#ececec" stroke="#4a4a4a" stroke-width="1.2"/><path d="M10 3.5 V6.5 H13.5" fill="none" stroke="#4a4a4a" stroke-width="1"/></svg>
<svg class="a" style="left:31px;top:42.5px;" width="16" height="16" viewBox="0 0 16 16"><path d="M1 4 H5 L6 5 H10 V7 H3.5 L1 12 Z" fill="#e4e4e4" stroke="#4a4a4a" stroke-width="1.1"/><path d="M1 12.5 L3.5 7 H13.5 L11 12.5 Z" fill="#9a9a9a" stroke="#4a4a4a" stroke-width="1.1"/></svg>
<svg class="a" style="left:49.5px;top:43.5px;" width="16" height="16" viewBox="0 0 16 16"><rect x="1.5" y="2" width="11" height="11.5" rx="1" fill="#4c5462" stroke="#333" stroke-width="1"/><rect x="3.5" y="2.5" width="7" height="4.5" fill="#e8e8e8"/><rect x="5" y="9.5" width="4" height="3.5" fill="#e0e0e0"/></svg>
<div class="a " style="left:67px;top:44px;width:1px;height:13px;background:#c8c8c8"></div>
<svg class="a" style="left:71.5px;top:43.5px;" width="16" height="16" viewBox="0 0 16 16"><rect x="3.5" y="1.5" width="7" height="4" fill="#f0f0f0" stroke="#4a4a4a"/><rect x="1" y="5" width="12" height="6" rx="1.5" fill="#d8d8d8" stroke="#4a4a4a" stroke-width="1.2"/><rect x="3.5" y="9.5" width="7" height="4" fill="#f4f4f4" stroke="#4a4a4a"/></svg>
<svg class="a" style="left:89.5px;top:43.5px;" width="16" height="16" viewBox="0 0 16 16"><path d="M1.5 1.5 H8 L11 4.5 V12 H1.5 Z" fill="#f0f0f0" stroke="#666" stroke-width="1"/><circle cx="7.5" cy="9" r="3" fill="#f4f4f4" stroke="#4a4a4a" stroke-width="1.2"/><path d="M9.7 11.2 L12.5 14" stroke="#222" stroke-width="1.6"/></svg>
<svg class="a" style="left:107px;top:43.5px;" width="16" height="16" viewBox="0 0 16 16"><rect x="3" y="1.5" width="7" height="3.5" fill="#f0f0f0" stroke="#4a4a4a"/><rect x="1" y="4.5" width="11" height="5.5" rx="1.5" fill="#d8d8d8" stroke="#4a4a4a" stroke-width="1.1"/><rect x="3" y="9" width="6" height="3" fill="#f4f4f4" stroke="#4a4a4a"/><path d="M8 11.5 H11 V9.5 L14.5 12.5 L11 15 V13.5 H8 Z" fill="#1e62b0"/></svg>
<svg class="a" style="left:124.5px;top:42.5px;" width="16" height="16" viewBox="0 0 16 16"><path d="M2 6 L6 3 H11 L14 6 V11 L10 14 H5 L2 11 Z" fill="#e8e8e8" stroke="#666" stroke-width="1"/><circle cx="9.5" cy="6.5" r="4" fill="#c8cc50" stroke="#888" stroke-width="0.8"/></svg>
<svg class="a" style="left:142.5px;top:43.5px;" width="16" height="16" viewBox="0 0 16 16"><rect x="1.5" y="4" width="12" height="10" fill="#5c6c80" stroke="#444"/><rect x="3" y="6" width="9" height="7" fill="#7a9ab8"/><path d="M6 12 L13 3" stroke="#e0b030" stroke-width="2.2"/><path d="M5 13 L6.5 10.5 L8 12 Z" fill="#333"/></svg>
<div class="a " style="left:162px;top:44px;width:1px;height:13px;background:#c8c8c8"></div>
<svg class="a" style="left:167px;top:43.5px;" width="16" height="16" viewBox="0 0 16 16"><g stroke="#333" stroke-width="1.3" fill="none"><path d="M3 2 L11 11 M11 2 L3 11"/><circle cx="3" cy="12.5" r="2"/><circle cx="11" cy="12.5" r="2"/></g></svg>
<svg class="a" style="left:184px;top:43.5px;" width="16" height="16" viewBox="0 0 16 16"><path d="M1.5 1.5 H8 V4 M1.5 1.5 V11 H4" fill="none" stroke="#4a4a4a" stroke-width="1.1"/><path d="M4.5 4.5 H10.5 L13.5 7.5 V14 H4.5 Z" fill="#f2f2f2" stroke="#4a4a4a" stroke-width="1.2"/></svg>
<svg class="a" style="left:203px;top:43.5px;" width="16" height="16" viewBox="0 0 16 16"><rect x="1.5" y="2.5" width="8" height="10" rx="1" fill="#b8b8b8" stroke="#555"/><rect x="3.5" y="1" width="4" height="2.5" fill="#777"/><path d="M6 6 H11 L13.5 8.5 V14 H6 Z" fill="#e8e8f0" stroke="#555"/></svg>
<svg class="a" style="left:220px;top:43.5px;" width="16" height="16" viewBox="0 0 16 16"><rect x="1.5" y="1.5" width="9" height="12" fill="#f4f4f4" stroke="#555"/><rect x="3" y="3" width="5" height="5" fill="#3a6a9a"/><path d="M5 13 C7 10 10 9 14 8 L12 12 C9 13 7 14 5 13 Z" fill="#8a5a20"/></svg>
<svg class="a" style="left:238px;top:43.5px;" width="16" height="16" viewBox="0 0 16 16"><path d="M2 5 H9 M2 5 L1 12 H8 M9 5 L11 9" fill="none" stroke="#444" stroke-width="1.1"/><circle cx="10.5" cy="11.5" r="2.5" fill="#f4f4f4" stroke="#444"/><path d="M10 7 L13 1 L11.5 5 H14 L11 10" fill="none" stroke="#e8a820" stroke-width="1.2"/></svg>
<div class="a " style="left:257px;top:44px;width:1px;height:13px;background:#c8c8c8"></div>
<svg class="a" style="left:262px;top:43.5px;" width="16" height="16" viewBox="0 0 16 16"><path d="M1.5 6 L6 1.5 V4 H9 C12 4 13.5 6 13.5 9 V13.5 H11 V9.5 C11 8 10.2 7.5 9 7.5 H6 V10.5 Z" fill="#f4f4f4" stroke="#333" stroke-width="1.2" stroke-linejoin="round"/></svg>
<svg class="a" style="left:280px;top:48.5px;" width="5" height="4" viewBox="0 0 5 4"><path d="M0 0 H5 L2.5 3.0 Z" fill="#333"/></svg>
<svg class="a" style="left:288px;top:43.5px;" width="16" height="16" viewBox="0 0 16 16"><g transform="translate(15,0) scale(-1,1)"><path d="M1.5 6 L6 1.5 V4 H9 C12 4 13.5 6 13.5 9 V13.5 H11 V9.5 C11 8 10.2 7.5 9 7.5 H6 V10.5 Z" fill="#f4f4f4" stroke="#9a9a9a" stroke-width="1.2" stroke-linejoin="round"/></g></svg>
<svg class="a" style="left:307px;top:48.5px;" width="5" height="4" viewBox="0 0 5 4"><path d="M0 0 H5 L2.5 3.0 Z" fill="#aaa"/></svg>
<div class="a " style="left:318px;top:44px;width:1px;height:13px;background:#c8c8c8"></div>
<svg class="a" style="left:321px;top:43.5px;" width="16" height="16" viewBox="0 0 16 16"><path d="M2 7 C4 5 7 4 9 6 L12 9 C13 11 11 14 8 14 C5 14 2 12 1.5 10 Z" fill="#d8d8d8" stroke="#555" stroke-width="1.1"/><path d="M4 8 L8 11 M6 7 L10 10" stroke="#666" stroke-width="0.8"/><path d="M12 1 V7 M9 4 H15" stroke="#111" stroke-width="1.5"/></svg>
<svg class="a" style="left:339px;top:43.5px;" width="16" height="16" viewBox="0 0 16 16"><circle cx="6" cy="6" r="4.5" fill="#eef2f2" stroke="#555" stroke-width="1.4"/><path d="M9.2 9.2 L14 14" stroke="#333" stroke-width="2.2" stroke-linecap="round"/></svg>
<svg class="a" style="left:357px;top:43.5px;" width="16" height="16" viewBox="0 0 16 16"><circle cx="6" cy="6" r="4.5" fill="#eef2f2" stroke="#555" stroke-width="1.4"/><path d="M9.2 9.2 L14 14" stroke="#333" stroke-width="2.2" stroke-linecap="round"/><rect x="3.5" y="3.5" width="5" height="5" fill="none" stroke="#333" stroke-width="1"/><path d="M11 15 L15 11 V15 Z" fill="#111"/></svg>
<svg class="a" style="left:375px;top:43.5px;" width="16" height="16" viewBox="0 0 16 16"><circle cx="6" cy="6" r="4.5" fill="#eef2f2" stroke="#555" stroke-width="1.4"/><path d="M9.2 9.2 L14 14" stroke="#333" stroke-width="2.2" stroke-linecap="round"/><path d="M7 2 C10 2 11 4 11 6" fill="none" stroke="#111" stroke-width="1.2"/><path d="M7.5 0 L5.5 2.5 L8.5 4 Z" fill="#111"/></svg>
<div class="a " style="left:395px;top:44px;width:1px;height:13px;background:#c8c8c8"></div>
<svg class="a" style="left:399px;top:43.5px;" width="16" height="16" viewBox="0 0 16 16"><rect x="1.5" y="1.5" width="9" height="12" fill="#f4f4f4" stroke="#555"/><rect x="3" y="3" width="6" height="5" fill="#3c5c80"/><path d="M3 11 H9 M3 11 L5 9.5" stroke="#333" stroke-width="1"/></svg>
<svg class="a" style="left:416px;top:43.5px;" width="16" height="16" viewBox="0 0 16 16"><rect x="1.5" y="1.5" width="12" height="12" fill="#f2f2f2" stroke="#555"/><path d="M5 1.5 V13.5" stroke="#555"/><g fill="#888"><rect x="7" y="3" width="2" height="2"/><rect x="10" y="3" width="2" height="2"/><rect x="7" y="6.5" width="2" height="2"/><rect x="10" y="6.5" width="2" height="2"/><rect x="7" y="10" width="2" height="2"/><rect x="10" y="10" width="2" height="2"/></g></svg>
<svg class="a" style="left:435px;top:43.5px;" width="16" height="16" viewBox="0 0 16 16"><rect x="2.5" y="1.5" width="8" height="12" fill="#f2f2f2" stroke="#555"/><path d="M2.5 4 H10.5 M2.5 7 H10.5 M2.5 10 H10.5 M6.5 4 V13.5" stroke="#999" stroke-width="0.8"/><path d="M10.5 3 V9" stroke="#333" stroke-width="1.5"/></svg>
<svg class="a" style="left:452px;top:43.5px;" width="16" height="16" viewBox="0 0 16 16"><path d="M1 10 L6 4 L14 10 L9 14 Z" fill="#e0e0e0" stroke="#555"/><path d="M3 8 L7 2 C9 1 11 3 12 5 L8 10" fill="#f0f0f0" stroke="#555"/></svg>
<svg class="a" style="left:470px;top:43.5px;" width="16" height="16" viewBox="0 0 16 16"><path d="M2 3 C3 1 6 1 7 3 C8 1 11 2 10 5" fill="none" stroke="#555" stroke-width="1.1"/><rect x="1.5" y="5" width="5" height="8" fill="none" stroke="#777"/><rect x="6.5" y="8" width="7" height="5" fill="#d8d8d8" stroke="#555"/><path d="M11 1 V6" stroke="#333"/></svg>
<svg class="a" style="left:488px;top:43.5px;" width="16" height="16" viewBox="0 0 16 16"><rect x="2.5" y="1.5" width="9" height="12" fill="#f2f2f2" stroke="#555" stroke-width="1.2"/><rect x="4" y="3" width="6" height="2.5" fill="#777"/><path d="M4.5 8 H9.5 M4.5 11 H9.5 M7 7 V12" stroke="#777"/></svg>
<div class="a " style="left:507px;top:44px;width:1px;height:13px;background:#c8c8c8"></div>
<svg class="a" style="left:510.5px;top:43.5px;" width="16" height="16" viewBox="0 0 16 16"><rect x="1.5" y="2.5" width="11" height="10.5" fill="#eaeaea" stroke="#555" stroke-width="1.1"/><text x="7" y="11.5" font-family="Liberation Sans" font-weight="bold" font-size="10" text-anchor="middle" fill="#111">?</text></svg>
<svg class="a" style="left:536px;top:42.5px;" width="16" height="16" viewBox="0 0 16 16"><text x="1" y="11" font-family="Liberation Sans" font-size="13" fill="#222">A</text><path d="M4 14 C7 11 10 8 15 5 L12 11 C9 13 7 14 4 14 Z" fill="#8a5a28"/></svg>
<svg class="a" style="left:650px;top:42.5px;" width="16" height="16" viewBox="0 0 16 16"><path d="M2 10 V14 M14 10 V14 M2 12 H14" stroke="#333" stroke-width="1.1"/><path d="M3 10 C6 8 10 5 14 2 L12 8 C9 10 6 10 3 10 Z" fill="#8a5a28"/></svg>
<svg class="a" style="left:767px;top:42.5px;" width="16" height="16" viewBox="0 0 16 16"><rect x="1.5" y="2.5" width="11" height="10" fill="#f4f4f4" stroke="#555"/><path d="M1.5 5.5 H12.5" stroke="#555" stroke-width="1.5"/><path d="M1.5 8.5 H12.5 M5 5.5 V12.5 M8.5 5.5 V12.5" stroke="#aaa" stroke-width="0.8"/><path d="M6 14 C9 12 11 10 15 7 L13 12 C11 14 8 15 6 14 Z" fill="#9a6028"/></svg>
<svg class="a" style="left:529px;top:44px;" width="6" height="14" viewBox="0 0 6 14"><rect x="1" y="0" width="1.5" height="1.5" fill="#2a2a2a"/><rect x="4" y="0" width="1.5" height="1.5" fill="#2a2a2a"/><rect x="1" y="3" width="1.5" height="1.5" fill="#2a2a2a"/><rect x="4" y="3" width="1.5" height="1.5" fill="#2a2a2a"/><rect x="1" y="6" width="1.5" height="1.5" fill="#2a2a2a"/><rect x="4" y="6" width="1.5" height="1.5" fill="#2a2a2a"/><rect x="1" y="9" width="1.5" height="1.5" fill="#2a2a2a"/><rect x="4" y="9" width="1.5" height="1.5" fill="#2a2a2a"/></svg>
<svg class="a" style="left:185px;top:65px;" width="6" height="14" viewBox="0 0 6 14"><rect x="1" y="0" width="1.5" height="1.5" fill="#2a2a2a"/><rect x="4" y="0" width="1.5" height="1.5" fill="#2a2a2a"/><rect x="1" y="3" width="1.5" height="1.5" fill="#2a2a2a"/><rect x="4" y="3" width="1.5" height="1.5" fill="#2a2a2a"/><rect x="1" y="6" width="1.5" height="1.5" fill="#2a2a2a"/><rect x="4" y="6" width="1.5" height="1.5" fill="#2a2a2a"/><rect x="1" y="9" width="1.5" height="1.5" fill="#2a2a2a"/><rect x="4" y="9" width="1.5" height="1.5" fill="#2a2a2a"/></svg>
<svg class="a" style="left:499px;top:65px;" width="6" height="14" viewBox="0 0 6 14"><rect x="1" y="0" width="1.5" height="1.5" fill="#2a2a2a"/><rect x="4" y="0" width="1.5" height="1.5" fill="#2a2a2a"/><rect x="1" y="3" width="1.5" height="1.5" fill="#2a2a2a"/><rect x="4" y="3" width="1.5" height="1.5" fill="#2a2a2a"/><rect x="1" y="6" width="1.5" height="1.5" fill="#2a2a2a"/><rect x="4" y="6" width="1.5" height="1.5" fill="#2a2a2a"/><rect x="1" y="9" width="1.5" height="1.5" fill="#2a2a2a"/><rect x="4" y="9" width="1.5" height="1.5" fill="#2a2a2a"/></svg>
<svg class="a" style="left:6px;top:44px;" width="6" height="14" viewBox="0 0 6 14"><rect x="1" y="0" width="1.5" height="1.5" fill="#2a2a2a"/><rect x="4" y="0" width="1.5" height="1.5" fill="#2a2a2a"/><rect x="1" y="3" width="1.5" height="1.5" fill="#2a2a2a"/><rect x="4" y="3" width="1.5" height="1.5" fill="#2a2a2a"/><rect x="1" y="6" width="1.5" height="1.5" fill="#2a2a2a"/><rect x="4" y="6" width="1.5" height="1.5" fill="#2a2a2a"/><rect x="1" y="9" width="1.5" height="1.5" fill="#2a2a2a"/><rect x="4" y="9" width="1.5" height="1.5" fill="#2a2a2a"/></svg>
<svg class="a" style="left:6px;top:65px;" width="6" height="14" viewBox="0 0 6 14"><rect x="1" y="0" width="1.5" height="1.5" fill="#2a2a2a"/><rect x="4" y="0" width="1.5" height="1.5" fill="#2a2a2a"/><rect x="1" y="3" width="1.5" height="1.5" fill="#2a2a2a"/><rect x="4" y="3" width="1.5" height="1.5" fill="#2a2a2a"/><rect x="1" y="6" width="1.5" height="1.5" fill="#2a2a2a"/><rect x="4" y="6" width="1.5" height="1.5" fill="#2a2a2a"/><rect x="1" y="9" width="1.5" height="1.5" fill="#2a2a2a"/><rect x="4" y="9" width="1.5" height="1.5" fill="#2a2a2a"/></svg>
<svg class="a" style="left:148.5px;top:63.5px;" width="16" height="16" viewBox="0 0 16 16"><circle cx="7" cy="8" r="4.8" fill="none" stroke="#777" stroke-width="2.2" stroke-dasharray="2 1.4"/><circle cx="7" cy="8" r="3.6" fill="#eee" stroke="#666" stroke-width="1"/><circle cx="7" cy="8" r="1.6" fill="none" stroke="#666"/></svg>
<svg class="a" style="left:167.5px;top:63.5px;" width="16" height="16" viewBox="0 0 16 16"><rect x="1" y="2" width="12" height="12" fill="none" stroke="#999" stroke-dasharray="1.5 1"/><path d="M3 4 H8 L11 7 V13 H3 Z" fill="#bbb" stroke="#777"/></svg>
<svg class="a" style="left:193px;top:63.5px;" width="16" height="16" viewBox="0 0 16 16"><path d="M1 5 H6 M1 8 H6 M1 11 H5" stroke="#555"/><rect x="6.5" y="6.5" width="6" height="7" fill="#f4f4f4" stroke="#555"/><path d="M8 9 H11 M8 11 H11" stroke="#777"/><path d="M6 2 L10 1 L9 4" fill="none" stroke="#333"/></svg>
<svg class="a" style="left:214px;top:64.0px;" width="16" height="16" viewBox="0 0 16 16"><path d="M6 1.5 C9 1.5 10.5 3.5 10.5 6 C10.5 8 9 9 8.5 10.5 H4.5 C4 9 2.5 8 2.5 6 C2.5 3.5 4 1.5 6 1.5 Z" fill="#f4e48a" stroke="#777" stroke-width="1"/><path d="M4.5 11.5 H8.5 M5 13 H8" stroke="#666" stroke-width="1.2"/></svg>
<svg class="a" style="left:225px;top:64.5px;" width="16" height="16" viewBox="0 0 16 16"><g stroke="#888" stroke-width="1"><path d="M7 0.5 V3 M7 11 V13.5 M0.5 7 H3 M11 7 H13.5 M2.5 2.5 L4 4 M10 10 L11.5 11.5 M2.5 11.5 L4 10 M10 4 L11.5 2.5"/></g><circle cx="7" cy="7" r="3.6" fill="#f0dc80" stroke="#888"/></svg>
<svg class="a" style="left:239px;top:64.5px;" width="16" height="16" viewBox="0 0 16 16"><rect x="1.5" y="1.5" width="8" height="10" fill="#e4e4e4" stroke="#aaa"/><path d="M3 4 H8 M3 6.5 H8" stroke="#bbb"/><circle cx="10" cy="10.5" r="3" fill="#ccc" stroke="#aaa"/></svg>
<svg class="a" style="left:252px;top:64.0px;" width="16" height="16" viewBox="0 0 16 16"><path d="M7 6 V3.5 C7 1.5 11.5 1.5 11.5 3.5 V5" fill="none" stroke="#333" stroke-width="1.3"/><rect x="1.5" y="6" width="8" height="7.5" fill="#a8c8e8" stroke="#2a5a8a" stroke-width="1.1"/><rect x="5" y="8.5" width="1.2" height="3" fill="#2a5a8a"/></svg>
<svg class="a" style="left:446px;top:63.5px;" width="16" height="16" viewBox="0 0 16 16"><path d="M1 8 L7 5 L13 8 L7 11 Z" fill="#d8e4ee" stroke="#3a6a9a"/><path d="M1 10.5 L7 13.5 L13 10.5 M1 12.5 L7 15.5 L13 12.5" fill="none" stroke="#3a6a9a"/><circle cx="9" cy="4" r="2.6" fill="#b0c8dc" stroke="#4a7aa8"/></svg>
<svg class="a" style="left:464px;top:63.5px;" width="16" height="16" viewBox="0 0 16 16"><path d="M2 7 L7 5 L12 7 L7 9 Z" fill="#eee" stroke="#555"/><path d="M2 9.5 L7 11.5 L12 9.5 M2 12 L7 14 L12 12" fill="none" stroke="#555"/><path d="M1 2.5 H6 M1 2.5 L3 1 M1 2.5 L3 4" stroke="#333"/></svg>
<svg class="a" style="left:482px;top:63.5px;" width="16" height="16" viewBox="0 0 16 16"><path d="M1 6 L6 4 L11 6 L6 8 Z" fill="#eee" stroke="#555"/><path d="M1 8.5 L6 10.5 L11 8.5" fill="none" stroke="#555"/><rect x="7.5" y="8.5" width="6" height="5.5" fill="#ddd" stroke="#444"/><path d="M5 2 L9 1" stroke="#555"/></svg>
<svg class="a" style="left:41.5px;top:6.5px;" width="16" height="16" viewBox="0 0 16 16"><path d="M1.5 3.5 H9.5 L12.5 6.5 V12.5 H1.5 Z" fill="#f0f0f0" stroke="#333" stroke-width="1"/></svg>
<svg class="a" style="left:60px;top:6.5px;" width="16" height="16" viewBox="0 0 16 16"><path d="M1 4 H5 L6 5 H10 V7 H3.5 L1 12 Z" fill="#e4e4e4" stroke="#333"/><path d="M1 12.5 L3.5 7 H13 L10.5 12.5 Z" fill="#b8b8b8" stroke="#333"/></svg>
<svg class="a" style="left:78.5px;top:6px;" width="16" height="16" viewBox="0 0 16 16"><rect x="1.5" y="2.5" width="10.5" height="11" rx="1.2" fill="#5a6272" stroke="#222"/><rect x="3.5" y="3" width="6.5" height="4" fill="#e8e8e8"/><rect x="5" y="10" width="3.5" height="3" fill="#ddd"/></svg>
<svg class="a" style="left:96.5px;top:6.5px;" width="16" height="16" viewBox="0 0 16 16"><path d="M1 6 L5.5 1.5 V4 H8 C11 4 12.5 6 12.5 9 V12.5 H10 V9.5 C10 8 9.3 7.5 8 7.5 H5.5 V10.5 Z" fill="#ececec" stroke="#333" stroke-width="1.1" stroke-linejoin="round"/></svg>
<svg class="a" style="left:113px;top:12px;" width="4" height="4" viewBox="0 0 4 4"><rect x="1" y="1" width="2" height="2" fill="#999"/></svg>
<svg class="a" style="left:121px;top:6.5px;" width="16" height="16" viewBox="0 0 16 16"><g transform="translate(14,0) scale(-1,1)"><path d="M1 6 L5.5 1.5 V4 H8 C11 4 12.5 6 12.5 9 V12.5 H10 V9.5 C10 8 9.3 7.5 8 7.5 H5.5 V10.5 Z" fill="#9a9a9a" stroke="#7a7a7a" stroke-width="1.1" stroke-linejoin="round"/></g></svg>
<svg class="a" style="left:138px;top:12px;" width="4" height="4" viewBox="0 0 4 4"><rect x="1" y="1" width="2" height="2" fill="#999"/></svg>
<svg class="a" style="left:146px;top:6.5px;" width="16" height="16" viewBox="0 0 16 16"><rect x="3.5" y="1.5" width="7" height="3.5" fill="#f0f0f0" stroke="#222"/><rect x="1" y="4.5" width="12" height="6" rx="1.5" fill="#e0e0e0" stroke="#222" stroke-width="1.2"/><rect x="3.5" y="9" width="7" height="4" fill="#fafafa" stroke="#222"/></svg>
<svg class="a" style="left:164px;top:13px;" width="8" height="5" viewBox="0 0 8 5"><path d="M0 0 H7 L3.5 4 Z" fill="#111"/></svg>
<svg class="a" style="left:638px;top:6px;" width="16" height="16" viewBox="0 0 16 16"><g fill="#f2f2f2" stroke="#222" stroke-width="0.8"><rect x="2" y="3" width="4" height="9" rx="1"/><rect x="8" y="3" width="4" height="9" rx="1"/><rect x="5.5" y="5" width="3" height="3"/></g></svg>
<svg class="a" style="left:655px;top:13px;" width="3" height="3" viewBox="0 0 3 3"><rect x="0" y="0" width="2" height="2" fill="#bbb"/></svg>
<svg class="a" style="left:664px;top:5px;" width="16" height="16" viewBox="0 0 16 16"><circle cx="5" cy="5" r="3.2" fill="none" stroke="#f2f2f2" stroke-width="2"/><path d="M7.5 7.5 L13 13" stroke="#f2f2f2" stroke-width="2.5"/></svg>
<svg class="a" style="left:685px;top:4px;" width="16" height="16" viewBox="0 0 16 16"><path d="M3 4 C1 8 4 12 9 11 Z" fill="#f2f2f2" stroke="#333" stroke-width="0.6"/><path d="M6 8 L10 4" stroke="#f2f2f2" stroke-width="1.3"/><circle cx="10.5" cy="3.5" r="1.3" fill="#f2f2f2"/><path d="M5 10 L3 15 H10 L8 10 Z" fill="#f2f2f2"/></svg>
<svg class="a" style="left:699px;top:5px;" width="16" height="16" viewBox="0 0 16 16"><path d="M7 1 L8.8 5.2 L13.5 5.5 L10 8.5 L11 13 L7 10.6 L3 13 L4 8.5 L0.5 5.5 L5.2 5.2 Z" fill="none" stroke="#f2f2f2" stroke-width="1.4"/></svg>
<svg class="a" style="left:717px;top:5px;" width="16" height="16" viewBox="0 0 16 16"><circle cx="7" cy="7.5" r="6" fill="#f2f2f2" stroke="#333" stroke-width="0.8"/><text x="7" y="11.5" font-family="Liberation Sans" font-weight="bold" font-size="10" text-anchor="middle" fill="#333">?</text></svg>
<svg class="a" style="left:735px;top:13px;" width="3" height="3" viewBox="0 0 3 3"><rect x="0" y="0" width="2" height="2" fill="#bbb"/></svg>
<svg class="a" style="left:755px;top:8px;" width="40" height="12" viewBox="0 0 40 12"><rect x="2.5" y="6" width="8.5" height="3.2" fill="#e4e4e4"/><rect x="16.5" y="3" width="8" height="6.5" fill="none" stroke="#e4e4e4" stroke-width="1.8"/><path d="M30 2.5 L36 9 M36 2.5 L30 9" stroke="#e4e4e4" stroke-width="2"/></svg>
<svg class="a" style="left:755px;top:27px;" width="40" height="12" viewBox="0 0 40 12"><rect x="2.5" y="5.5" width="8.5" height="3.2" fill="#e4e4e4"/><rect x="18.5" y="2" width="5.5" height="5.5" fill="none" stroke="#e4e4e4" stroke-width="1.5"/><rect x="16.5" y="4.3" width="6" height="5.5" fill="#686868" stroke="#e4e4e4" stroke-width="1.5"/><path d="M30 2.5 L36 9 M36 2.5 L30 9" stroke="#e4e4e4" stroke-width="2"/></svg>
<svg class="a" style="left:0px;top:0px;" width="30" height="420" viewBox="0 0 30 420"><g fill="none" stroke="#333" stroke-width="1"><path d="M8.7 105 L19.5 94.7"/><circle cx="8.7" cy="105" r="1.3" fill="#333"/><circle cx="19.5" cy="94.7" r="1.3" fill="#333"/><path d="M8.7 122.8 L19.5 111.2"/><circle cx="14" cy="117" r="1.3" fill="#eee"/><path d="M8 123.5 L8.5 120.5 L11 122.5 Z M20 110.5 L19.5 113.5 L17 111.5 Z" fill="#333"/><path d="M8.5 137.7 H15.5 C19 137.7 19.5 133 17.5 131.5 C16 130.5 14.5 131 14 132"/><circle cx="8.7" cy="137.7" r="1.2" fill="#333"/><circle cx="15" cy="137.7" r="1.2" fill="#333"/><circle cx="14.2" cy="132" r="1.1" fill="#333"/><path d="M14.3 145 L20.5 149.5 L18.3 157 H10.3 L8 149.5 Z" fill="#f8f8f8" stroke="#444"/><rect x="8.7" y="165.5" width="11" height="6.5" fill="#f2f2f2" stroke="#444"/><circle cx="8.7" cy="172" r="1.2" fill="#333"/><circle cx="19.7" cy="165.5" r="1.2" fill="#333"/><path d="M8.8 190.5 C9.5 185 13 181.5 19 180.7"/><circle cx="8.8" cy="190.5" r="1.3" fill="#333"/><circle cx="19" cy="180.7" r="1.3" fill="#333"/><circle cx="13.5" cy="202" r="5.5" stroke="#444" stroke-width="1.1" fill="#f8f8f8"/><path d="M13.5 202 L17 199"/><circle cx="13.5" cy="202" r="1.4" fill="#333"/><path d="M9 215.5 C9 213 12 213 13.5 214.5 C15 213 18 213 18 215.5 C20 216.5 20 219 18.5 220 C20 222 18.5 225 16 224.5 C15 226 12 226 11 224.5 C8.5 225 7.5 222 9 220 C7.5 219 7.5 216.5 9 215.5 Z" fill="#f8f8f8" stroke="#444"/><path d="M8.2 243 C8.5 238 11 236 13 238 C15 240 18 237 19.5 232" stroke-width="1.1"/><ellipse cx="14" cy="254" rx="5.7" ry="3.6" stroke-width="1.2"/><circle cx="14" cy="250.5" r="1.2" fill="#333"/><path d="M9 273 C8 270 11 268.5 14.5 268.5 C18 268.5 20 270 19 272.5 C18.5 274 16 275 14 275"/><circle cx="9" cy="273" r="1.1" fill="#333"/><circle cx="14" cy="275" r="1.1" fill="#333"/><path d="M12 284 H17 L19 286.5 V291" fill="#f4f4f4" stroke="#555"/><path d="M9 287 H14 L16 289 V292.5 H9 Z" fill="#f4f4f4" stroke="#444"/><path d="M17.5 294 L20.5 291 V294 Z" fill="#111"/><circle cx="9" cy="292.5" r="1" fill="#333"/><rect x="9" y="302" width="9" height="6.5" rx="1" fill="#f4f4f4" stroke="#444"/><circle cx="18" cy="308" r="2.2" fill="#f4f4f4" stroke="#444"/><circle cx="9.5" cy="308" r="1.1" fill="#333"/><rect x="12.5" y="322" width="2" height="2" fill="#222" stroke="none"/><rect x="9" y="335.5" width="10" height="10" fill="#c8c8c8" stroke="#444"/><path d="M9 340 L13.5 335.5 M9 344 L17.5 335.5 M11 345.5 L19 337.5 M15 345.5 L19 341.5" stroke="#888" stroke-width="0.7"/><path d="M8 336 H20 M8 345 H20 M9.5 334 V347 M18.5 334 V347" stroke="#444" stroke-width="0.8"/><rect x="9" y="352.5" width="10" height="10" fill="url(#grd)" stroke="#444"/><path d="M8 353 H20 M9.5 351.5 V364 M18.5 351.5 V364" stroke="#444" stroke-width="0.8"/><path d="M9 370 H15 L19.5 374.5 V379.5 H9 Z" fill="#f4f4f4" stroke="#444"/><circle cx="13" cy="375" r="1.8" stroke="#444"/><rect x="8.5" y="386.5" width="11" height="11.5" fill="#f4f4f4" stroke="#555"/><path d="M8.5 389 H19.5" stroke="#555" stroke-width="1.4"/><path d="M8.5 392 H19.5 M8.5 395 H19.5 M12 389 V398 M16 389 V398" stroke="#999" stroke-width="0.7"/></g><defs><linearGradient id="grd" x1="0" y1="0" x2="0" y2="1"><stop offset="0" stop-color="#e8e8e8"/><stop offset="1" stop-color="#555"/></linearGradient></defs><text x="8.5" y="414.5" font-family="Liberation Sans" font-size="13" fill="#222">A</text></svg>
<svg class="a" style="left:0px;top:0px;" width="800" height="600" viewBox="0 0 800 600"><g fill="none" stroke="#333" stroke-width="1"><path d="M622 102 L631 94 C632.5 93 634 94.5 633 96 L625 104 Z" fill="#c06040" stroke="#7a3a20"/><path d="M620.5 105.5 H634" stroke="#333" stroke-width="1.1"/><circle cx="623.5" cy="114" r="2.8"/><path d="M627 112.5 H631 V115" /><path d="M630 114 L631 116 L632 114" fill="#111"/><circle cx="628" cy="119" r="3" fill="#c8e4f8" stroke="#5aa8e0" stroke-width="1.2"/><circle cx="631" cy="120" r="2.5" fill="#c8e4f8" stroke="#5aa8e0" stroke-width="1.2"/><path d="M621 139 L626 129 V139 Z" fill="#f0f0f0" stroke="#444"/><path d="M628 139 L628 129 L633 139 Z" fill="#c8e4f8" stroke="#5aa8e0"/><path d="M627 128 V140" stroke="#666"/><path d="M621 155.5 C620 152 622 150 624 151 C624.5 147 629 146 630 149 C630.5 151 631 152 633 152 C634.5 153 634 155.5 632 155.5 Z" fill="#fff" stroke="#333"/><path d="M623 154 H632 M626 150.5 V154 M629 150 V154" stroke="#5aa8e0" stroke-width="1"/><rect x="621.5" y="162.5" width="5" height="5" fill="#c8e4f8" stroke="#5aa8e0" stroke-width="1"/><rect x="628.5" y="162.5" width="5" height="5" fill="#c8e4f8" stroke="#5aa8e0" stroke-width="1"/><rect x="621.5" y="169.5" width="5" height="5" fill="#c8e4f8" stroke="#5aa8e0" stroke-width="1"/><rect x="628.5" y="169.5" width="5" height="5" fill="#c8e4f8" stroke="#5aa8e0" stroke-width="1"/><path d="M627.5 179.5 V191.5 M621 185.5 H634" stroke="#222" stroke-width="1.1"/><path d="M625.5 181.5 L627.5 179 L629.5 181.5 Z M625.5 189.5 L627.5 192 L629.5 189.5 Z M623 183.5 L620.5 185.5 L623 187.5 Z M632 183.5 L634.5 185.5 L632 187.5 Z" fill="#111"/><rect x="626" y="183.5" width="3" height="4" fill="#fff" stroke="#333" stroke-width="0.8"/><path d="M624 199.5 C619.5 202 620.5 208.5 627 208.5 C633 208.5 634 201.5 629.5 199" stroke="#333" stroke-width="1.2"/><path d="M627.5 197 L631 199 L628 201 Z" fill="#111"/><rect x="621.5" y="214.5" width="11.5" height="11.5" fill="#c8e4f8" stroke="#5aa8e0" stroke-width="1.1"/><rect x="621.5" y="220.5" width="5.5" height="5.5" fill="#fff" stroke="#333"/><path d="M621.5 231.5 H629.5 L633 242 H621.5 Z" fill="#fff" stroke="#333"/><path d="M629.5 231.5 L633 242 H629 Z" fill="#c8e4f8" stroke="#5aa8e0"/><path d="M623.5 238 H629" stroke="#111" stroke-width="1.2"/><path d="M628 236.5 L630 238 L628 239.5 Z" fill="#111"/><path d="M620.5 254 H623.5 M625 254 H626" stroke="#5aa8e0" stroke-width="1.1"/><path d="M627 254 H634" stroke="#555" stroke-dasharray="1.5 1"/><path d="M623 257 L629 250.5" stroke="#222" stroke-width="1"/><path d="M620.5 272 H625" stroke="#222" stroke-width="1.1"/><path d="M626 272 H629" stroke="#555" stroke-dasharray="1.5 1"/><path d="M628 277 L633.5 267" stroke="#5aa8e0" stroke-width="1.1"/><path d="M621.5 285 V293 H633" stroke="#333" stroke-width="1.1"/><path d="M621.5 285 H629" stroke="#333"/><path d="M629 283 L633 285 L629 287 Z" fill="#5aa8e0"/><path d="M621.5 302 V310.5 H633 V302" stroke="#333" stroke-width="1.1"/><path d="M621.5 302 H623 M631 302 H633" stroke="#333"/><path d="M624 300 L627 302 L624 304 Z M630 300 L627.5 302 L630 304 Z" fill="#5aa8e0"/><path d="M620.5 323 H624 M631 323 H634.5" stroke="#5aa8e0" stroke-width="1.2"/><path d="M624 321 L627 323 L624 325 Z M631 321 L628 323 L631 325 Z" fill="#1a4a7a"/><path d="M621.5 346.5 V339 L627 334 H633.5 V346.5 Z" fill="#f4f4f4" stroke="#333" stroke-width="1.1"/><path d="M621.5 363 V357 C621.5 353 624 351.5 628 351.5 H633.5 V363 Z" fill="#f4f4f4" stroke="#333" stroke-width="1.1"/><path d="M621 373 L626 371 L626 378.5 L621 379 Z" fill="#c8e4f8" stroke="#5aa8e0"/><path d="M626 371 L631 369.5 L634 371.5 L634 377 L626 378.5" fill="#c8e4f8" stroke="#5aa8e0"/><path d="M628 371 V377.5 M626 371 L630 372.5 L634 371.5" stroke="#5aa8e0"/><rect x="620.5" y="394" width="8" height="6" fill="#f4f4f4" stroke="#444"/><rect x="623.5" y="396.5" width="8" height="6" fill="#9a9a9a" stroke="#444"/><rect x="626" y="399.5" width="8" height="6" fill="#f4f4f4" stroke="#444"/><rect x="620.5" y="410.5" width="8" height="6" fill="#f4f4f4" stroke="#444"/><rect x="623.5" y="413.5" width="8" height="6" fill="#f4f4f4" stroke="#444"/><rect x="626" y="416.5" width="8" height="6" fill="#f4f4f4" stroke="#444"/><rect x="620.5" y="428.5" width="9" height="7" fill="#f4f4f4" stroke="#444"/><rect x="624" y="432.5" width="10" height="7" fill="#a8a8a8" stroke="#444"/><rect x="624" y="450" width="10" height="7" fill="#c8c8c8" stroke="#444"/><rect x="620.5" y="446" width="9" height="7" fill="#f4f4f4" stroke="#444"/></g></svg>
<div class="a " style="left:29.5px;top:495px;width:11px;height:11px;background:linear-gradient(#f0f0f0,#dcdcdc);border-right:1px solid #c8c8c8"></div>
<div class="a " style="left:40.75px;top:495px;width:11px;height:11px;background:linear-gradient(#f0f0f0,#dcdcdc);border-right:1px solid #c8c8c8"></div>
<div class="a " style="left:52.0px;top:495px;width:11px;height:11px;background:linear-gradient(#f0f0f0,#dcdcdc);border-right:1px solid #c8c8c8"></div>
<div class="a " style="left:63.25px;top:495px;width:11px;height:11px;background:linear-gradient(#f0f0f0,#dcdcdc);border-right:1px solid #c8c8c8"></div>
<svg class="a" style="left:29px;top:494px;" width="46" height="12" viewBox="0 0 46 12"><g fill="#b4b4b4"><rect x="2.5" y="3" width="1.2" height="6"/><path d="M9 3 L4.5 6 L9 9 Z"/><path d="M20 3 L15.5 6 L20 9 Z"/><path d="M26 3 L30.5 6 L26 9 Z"/><path d="M37 3 L41.5 6 L37 9 Z"/><rect x="42" y="3" width="1.2" height="6"/></g></svg>
<svg class="a" style="left:75px;top:493px;" width="135" height="14" viewBox="0 0 135 14"><path d="M2 1 H42 L38 12.5 H6 Z" fill="#000"/><path d="M38 12.5 L42.5 1.5 M83 12.5 L86.5 1.5 M124.5 12.5 L128.5 1.5" stroke="#555" stroke-width="0.9" fill="none"/><path d="M38 12.5 H125" stroke="#fafafa" stroke-width="1.2"/></svg>
<div class="a t" style="left:85.5px;top:496px;font-size:9.5px;color:#c41616;transform:scaleX(0.8502);transform-origin:0 0;">Model</div>
<div class="a t" style="left:122px;top:496px;font-size:9.5px;color:#222;transform:scaleX(0.8281);transform-origin:0 0;">Layout1</div>
<div class="a t" style="left:165px;top:496px;font-size:9.5px;color:#222;transform:scaleX(0.8281);transform-origin:0 0;">Layout2</div>
<div class="a " style="left:145px;top:557px;width:16px;height:18px;background:linear-gradient(#d4d4d4,#b8b8b8);border-left:1px solid #a8a8a8;border-right:1px solid #e0e0e0"></div>
<div class="a " style="left:162px;top:557px;width:16px;height:18px;background:linear-gradient(#d4d4d4,#b8b8b8);border-left:1px solid #a8a8a8;border-right:1px solid #e0e0e0"></div>
<div class="a " style="left:179px;top:557px;width:16px;height:18px;background:linear-gradient(#d4d4d4,#b8b8b8);border-left:1px solid #a8a8a8;border-right:1px solid #e0e0e0"></div>
<div class="a " style="left:196px;top:557px;width:16px;height:18px;background:linear-gradient(#d8ecf4,#b4d6e4);border-left:1px solid #8ab0c0;border-right:1px solid #e0f0f8"></div>
<div class="a " style="left:213px;top:557px;width:17px;height:18px;background:linear-gradient(#d8ecf4,#b4d6e4);border-left:1px solid #8ab0c0;border-right:1px solid #e0f0f8"></div>
<div class="a " style="left:230.5px;top:557px;width:16.5px;height:18px;background:linear-gradient(#d8ecf4,#b4d6e4);border-left:1px solid #8ab0c0;border-right:1px solid #e0f0f8"></div>
<div class="a " style="left:248px;top:557px;width:16px;height:18px;background:linear-gradient(#d8ecf4,#b4d6e4);border-left:1px solid #8ab0c0;border-right:1px solid #e0f0f8"></div>
<div class="a " style="left:265px;top:557px;width:16px;height:18px;background:linear-gradient(#d8ecf4,#b4d6e4);border-left:1px solid #8ab0c0;border-right:1px solid #e0f0f8"></div>
<div class="a " style="left:282px;top:557px;width:16px;height:18px;background:linear-gradient(#d4d4d4,#b8b8b8);border-left:1px solid #a8a8a8;border-right:1px solid #e0e0e0"></div>
<div class="a " style="left:299px;top:557px;width:16px;height:18px;background:linear-gradient(#d4d4d4,#b8b8b8);border-left:1px solid #a8a8a8;border-right:1px solid #e0e0e0"></div>
<svg class="a" style="left:0px;top:0px;" width="800" height="600" viewBox="0 0 800 600"><g fill="none" stroke="#333" stroke-width="1"><g fill="#555" stroke="none"><rect x="150.0" y="562.0" width="1.2" height="1.2"/><rect x="150.0" y="564.5" width="1.2" height="1.2"/><rect x="150.0" y="567.0" width="1.2" height="1.2"/><rect x="152.5" y="562.0" width="1.2" height="1.2"/><rect x="152.5" y="564.5" width="1.2" height="1.2"/><rect x="152.5" y="567.0" width="1.2" height="1.2"/><rect x="155.0" y="562.0" width="1.2" height="1.2"/><rect x="155.0" y="564.5" width="1.2" height="1.2"/><rect x="155.0" y="567.0" width="1.2" height="1.2"/></g><path d="M157 561 V569 M150 570 H157" stroke-width="1.2"/><rect x="164.5" y="559.5" width="11" height="12" stroke="#444"/><path d="M164.5 562.5 H175.5 M164.5 565.5 H175.5 M164.5 568.5 H175.5 M167.5 559.5 V571.5 M170 559.5 V571.5 M172.5 559.5 V571.5" stroke="#555" stroke-width="0.8"/><path d="M181.5 559 V570.5 H193.5 M181.5 566 H185 V570.5" stroke="#555"/><circle cx="203" cy="567" r="4" stroke="#3a5a6a" stroke-width="1.2"/><path d="M203 567 L208 561" stroke="#223"/><circle cx="203" cy="567" r="1.2" fill="#223"/><rect x="216" y="560" width="11" height="11" fill="#f4f8fa" stroke="#3a4a5a"/><circle cx="216" cy="560" r="1.6" fill="#e88" stroke="none"/><path d="M242 561 L234 568.5 H242.5" stroke="#2a3a4a" stroke-width="1.2"/><path d="M250.5 559 V571 H262 M251 570 L258 563" stroke="#2a3a4a"/><circle cx="258.5" cy="562" r="1.8" fill="#e8b830" stroke="none"/><circle cx="261" cy="570.5" r="1" fill="#222" stroke="none"/><path d="M267.5 566 H273 M270 563.5 V568.5" stroke="#111" stroke-width="1.4"/><rect x="272.5" y="566" width="5" height="3" fill="#556" stroke="none"/><path d="M284.5 566 H295.5 M291 561 V571" stroke="#111" stroke-width="1.7"/><rect x="303.5" y="561.5" width="6.5" height="9" fill="#f4f4f4" stroke="#111" stroke-width="1.2"/><path d="M305 564.5 H308.5 M305 567 H308.5 M306.8 563 V569" stroke="#333" stroke-width="0.8"/></g></svg>
<div class="a " style="left:409px;top:557px;width:33px;height:18px;background:linear-gradient(#d2d2d2,#bcbcbc)"></div>
<div class="a t" style="left:410px;top:562px;font-size:9.5px;color:#333;transform:scaleX(0.8581);transform-origin:0 0;">MODEL</div>
<div class="a " style="left:443px;top:557px;width:15px;height:18px;background:linear-gradient(#d4d4d4,#b8b8b8);border-left:1px solid #a8a8a8;border-right:1px solid #e0e0e0"></div>
<div class="a " style="left:459px;top:557px;width:17px;height:18px;background:linear-gradient(#d4d4d4,#b8b8b8);border-left:1px solid #a8a8a8;border-right:1px solid #e0e0e0"></div>
<div class="a " style="left:477px;top:557px;width:9px;height:18px;background:linear-gradient(#9a9a9a,#8a8a8a)"></div>
<div class="a " style="left:486px;top:557px;width:16px;height:18px;background:linear-gradient(#d4d4d4,#b8b8b8);border-left:1px solid #a8a8a8;border-right:1px solid #e0e0e0"></div>
<div class="a " style="left:503px;top:557px;width:17px;height:18px;background:linear-gradient(#d4d4d4,#b8b8b8);border-left:1px solid #a8a8a8;border-right:1px solid #e0e0e0"></div>
<div class="a " style="left:521px;top:557px;width:15px;height:18px;background:linear-gradient(#d4d4d4,#b8b8b8);border-left:1px solid #a8a8a8;border-right:1px solid #e0e0e0"></div>
<div class="a " style="left:537px;top:557px;width:18px;height:18px;background:linear-gradient(#d4d4d4,#b8b8b8);border-left:1px solid #a8a8a8;border-right:1px solid #e0e0e0"></div>
<div class="a " style="left:555px;top:557px;width:9px;height:18px;background:linear-gradient(#9a9a9a,#8a8a8a)"></div>
<div class="a " style="left:564.5px;top:557px;width:40px;height:18px;background:linear-gradient(#d4d4d4,#b8b8b8);border-left:1px solid #a8a8a8;border-right:1px solid #e0e0e0"></div>
<div class="a " style="left:605px;top:557px;width:16px;height:18px;background:linear-gradient(#d4d4d4,#b8b8b8);border-left:1px solid #a8a8a8;border-right:1px solid #e0e0e0"></div>
<div class="a " style="left:622px;top:557px;width:18px;height:18px;background:linear-gradient(#d4d4d4,#b8b8b8);border-left:1px solid #a8a8a8;border-right:1px solid #e0e0e0"></div>
<div class="a " style="left:640px;top:557px;width:3px;height:18px;background:linear-gradient(#9a9a9a,#8a8a8a)"></div>
<div class="a " style="left:643px;top:557px;width:90px;height:18px;background:linear-gradient(#d4d4d4,#b8b8b8);border-left:1px solid #a8a8a8;border-right:1px solid #e0e0e0"></div>
<div class="a " style="left:735px;top:557px;width:17px;height:18px;background:linear-gradient(#d4d4d4,#b8b8b8);border-left:1px solid #a8a8a8;border-right:1px solid #e0e0e0"></div>
<div class="a " style="left:752px;top:557px;width:5px;height:18px;background:linear-gradient(#9a9a9a,#8a8a8a)"></div>
<div class="a " style="left:757px;top:557px;width:9px;height:18px;background:linear-gradient(#d4d4d4,#b8b8b8);border-left:1px solid #a8a8a8;border-right:1px solid #e0e0e0"></div>
<div class="a " style="left:766px;top:557px;width:16px;height:18px;background:linear-gradient(#d4d4d4,#b8b8b8);border-left:1px solid #a8a8a8;border-right:1px solid #e0e0e0"></div>
<div class="a t" style="left:580px;top:561.5px;font-size:10.5px;color:#333;transform:scaleX(0.8214);transform-origin:0 0;">1:1</div>
<div class="a t" style="left:660px;top:562px;font-size:9.5px;color:#333;transform:scaleX(0.8235);transform-origin:0 0;">AutoCAD Classic</div>
<svg class="a" style="left:0px;top:0px;" width="800" height="600" viewBox="0 0 800 600"><g fill="none" stroke="#333" stroke-width="1"><rect x="446.5" y="560.5" width="9" height="8" fill="#f4f4f4" stroke="#444"/><path d="M448.5 567 L451 562.5 V567 Z" fill="#444"/><path d="M445 571 H457" stroke="#222" stroke-width="1.3"/><rect x="461.5" y="560" width="5.5" height="5.5" fill="#f4f4f4" stroke="#444"/><rect x="468" y="560" width="5.5" height="5.5" fill="#f4f4f4" stroke="#444"/><path d="M461 570 H474" stroke="#222" stroke-width="1.3"/><path d="M488.5 565 C491 562 495 562 497 565 L499 568 C499 571 496 572.5 493 572 C490.5 571.5 488.5 569 488.5 565 Z" fill="#ddd" stroke="#555"/><path d="M498 559 V564 M495.5 561.5 H500.5" stroke="#111" stroke-width="1.3"/><circle cx="510" cy="564.5" r="4.2" fill="#eef" stroke="#555" stroke-width="1.3"/><path d="M513 567.5 L517 571.5" stroke="#333" stroke-width="2"/><circle cx="528.5" cy="566" r="5.5" fill="#e4e4e4" stroke="#666" stroke-width="1.3"/><circle cx="528.5" cy="566" r="2.5" fill="#ccc" stroke="#777"/><rect x="540" y="563" width="12" height="9" fill="#f4f4f4" stroke="#555"/><path d="M544 565 L548 567.5 L544 570 Z" fill="#222"/><circle cx="542" cy="560.5" r="1.3" fill="#555"/><circle cx="546" cy="560.5" r="1.3" fill="#555"/><circle cx="550" cy="560.5" r="1.3" fill="#555"/><path d="M572 560 V566 L567.5 571 M572 566 L576.5 571" stroke="#333" stroke-width="1.5"/><path d="M597 563 H603 L600 567 Z" fill="#111" stroke="none"/><path d="M612 560 V566 L607.5 571 M612 566 L616.5 571" stroke="#333" stroke-width="1.5"/><circle cx="615.5" cy="568" r="2.8" fill="#e8c830" stroke="none"/><path d="M631 560 V566 L626.5 571 M631 566 L635.5 571" stroke="#9a9a9a" stroke-width="1.5"/><circle cx="651" cy="566" r="4.5" fill="none" stroke="#555" stroke-width="2" stroke-dasharray="2 1.2"/><circle cx="651" cy="566" r="2.2" fill="#ddd" stroke="#555"/><path d="M723 563 H729 L726 567 Z" fill="#111" stroke="none"/><rect x="738.5" y="565.5" width="8" height="6.5" fill="#f4f4f4" stroke="#333"/><path d="M744 565.5 V562 C744 559 750 559 750 562 V564" stroke="#333" stroke-width="1.2"/><path d="M759 564 H764 L761.5 567.5 Z" fill="#111" stroke="none"/><rect x="768.5" y="560.5" width="11" height="11" fill="#f8f8f8" stroke="#333"/><path d="M768.5 562.5 H779.5" stroke="#333" stroke-width="1.3"/><g fill="#e8e8e8" stroke="none"><rect x="795" y="568" width="2" height="2"/><rect x="791" y="568" width="2" height="2"/><rect x="787" y="568" width="2" height="2"/><rect x="795" y="564" width="2" height="2"/><rect x="791" y="564" width="2" height="2"/><rect x="795" y="560" width="2" height="2"/></g></g></svg>
<div class="a " style="left:797px;top:0px;width:3px;height:576px;background:linear-gradient(#1a1a1a,#1a1e26 300px,#10204a 420px,#0c1a30 576px)"></div>
<div class="a " style="left:0px;top:576px;width:800px;height:24px;background:linear-gradient(#14243c 0,#14243c 1px,#4a8ad0 1px,#3a80c8 3px,#2e72b8 8px,#1c5ca2 11px,#0e4688 13px,#0a3c7c 17px,#082e66 24px)"></div>
<div class="a " style="left:0px;top:577px;width:76px;height:23px;background:linear-gradient(#4a8ad4,#3474c0 40%,#1a4e94 55%,#143f80);border-radius:0 11px 11px 0;box-shadow:1px 0 0 #4a80c8,2px 0 1px #0e2e60"></div>
<svg class="a" style="left:7px;top:580px;" width="17" height="17" viewBox="0 0 17 17"><path d="M1 4 C3 2 5 2 7.5 3.5 L6.5 8 C4.5 6.5 2.5 6.5 0 8 Z" fill="#e85a28"/><path d="M8.5 3.5 C11 5 13 5 15.5 3.5 L14.5 8 C12 9.5 10 9.5 7.5 8 Z" fill="#6ab82a"/><path d="M0 9 C2.5 7.5 4.5 7.5 6.5 9 L5.5 13.5 C3.5 12 1.5 12 -1 13.5 Z" fill="#3a78e0"/><path d="M7.5 9 C10 10.5 12 10.5 14.5 9 L13.5 13.5 C11 15 9 15 6.5 13.5 Z" fill="#f0c020"/></svg>
<div class="a t" style="left:27px;top:580.5px;color:#fff;font-style:italic;font-weight:bold;font-size:15px;transform:scaleX(0.9534);transform-origin:0 0;">start</div>
<div class="a " style="left:77.5px;top:578.5px;width:128.5px;height:19.5px;background:linear-gradient(#3a78c4,#2c68b4 45%,#1e5098 55%,#1a4a8e);border-radius:3px;box-shadow:inset 0 0 0 1px #184080"></div>
<svg class="a" style="left:89px;top:581px;" width="15" height="15" viewBox="0 0 15 15"><path d="M3 11 C0 7 4 2 9 3 C12 3.5 13 6 12 8 H5" fill="none" stroke="#4ac0f0" stroke-width="2.2"/><path d="M2 13 C6 10 11 6 13 1" fill="none" stroke="#e8d040" stroke-width="1.3"/></svg>
<div class="a t" style="left:106px;top:584px;font-size:10px;color:#fff;transform:scaleX(0.8392);transform-origin:0 0;">AutoCAD Forums - Wi...</div>
<div class="a " style="left:208.5px;top:578.5px;width:123px;height:19px;background:linear-gradient(#0c2c5c,#0a2654 50%,#0c2c60);border-radius:3px;box-shadow:inset 0 0 0 1px #2a5a98"></div>
<svg class="a" style="left:215px;top:581px;" width="15" height="15" viewBox="0 0 15 15"><rect x="1" y="4" width="12" height="10" fill="#f4f4f4" stroke="#bbb" stroke-width="0.6"/><rect x="1" y="1" width="12" height="6" fill="#d42a2a"/><text x="2" y="7" font-family="Liberation Sans" font-size="6" font-weight="bold" fill="#fff">AU</text></svg>
<div class="a t" style="left:232px;top:584px;font-size:10px;color:#fff;transform:scaleX(0.8282);transform-origin:0 0;">AutoCAD 2010 - EDU...</div>
<div class="a " style="left:713px;top:577px;width:87px;height:23px;background:linear-gradient(#1a4e90,#0e3c78 45%,#0a3068 55%,#0a2c60);box-shadow:inset 1px 0 0 #0a2850"></div>
<svg class="a" style="left:721px;top:580px;" width="30" height="17" viewBox="0 0 30 17"><circle cx="6" cy="7" r="4" fill="#d8d8d8" stroke="#444" stroke-width="1"/><circle cx="6" cy="7" r="1.5" fill="#555"/><path d="M8 12 L12 9" stroke="#8ab0e0" stroke-width="2"/><rect x="15" y="2" width="13" height="13" rx="2" fill="#4ac040"/><path d="M18 8.5 L21 11.5 L26 5" stroke="#fff" stroke-width="2" fill="none"/></svg>
<div class="a t" style="left:755px;top:584px;font-size:10px;color:#fff;transform:scaleX(0.8044);transform-origin:0 0;">10:03 AM</div>
<svg class="a" style="left:0px;top:0px;" width="800" height="600" viewBox="0 0 800 600"><g fill="none"><rect x="734" y="114" width="10" height="12" stroke="#666" stroke-dasharray="1 1" stroke-width="0.8"/><path d="M739 116 L742 120 L739 124 L736 120 Z" fill="#2a9a3a"/><path d="M739 117 V123 M736.5 120 H741.5" stroke="#fff" stroke-width="0.8"/><path d="M754 116 H759 V121 H754 Z" fill="#a8c890" stroke="#555" stroke-width="0.9"/><circle cx="754" cy="120" r="2.8" stroke="#666" stroke-width="1.1"/><path d="M759 118 L764.5 123 L761.5 123.5 L762.5 126 L761 126.5 L760 124 L758.5 125.5 Z" fill="#f4f4f4" stroke="#444" stroke-width="0.9"/><rect x="772" y="115" width="6.5" height="10" fill="#a8c890" stroke="#444" stroke-width="1"/><path d="M776 118 L780.5 123 L778 123.5 L779 126 L777.5 126.5 L776.5 124 L775 125.5 Z" fill="#f4f4f4" stroke="#333" stroke-width="0.9"/><circle cx="781" cy="117" r="2.5" fill="#f0d040"/></g></svg>
<svg class="a" style="left:0px;top:0px;" width="800" height="42" viewBox="0 0 800 42"><rect x="45.5" y="37.3" width="5" height="1" fill="#d8d8d8"/><rect x="74.5" y="37.3" width="5" height="1" fill="#d8d8d8"/><rect x="105.5" y="37.3" width="6" height="1" fill="#d8d8d8"/><rect x="139" y="37.3" width="3" height="1" fill="#d8d8d8"/><rect x="183.5" y="37.3" width="5" height="1" fill="#d8d8d8"/><rect x="221" y="37.3" width="6" height="1" fill="#d8d8d8"/><rect x="257" y="37.3" width="6" height="1" fill="#d8d8d8"/><rect x="315" y="37.3" width="5" height="1" fill="#d8d8d8"/><rect x="347" y="37.3" width="7" height="1" fill="#d8d8d8"/><rect x="387.5" y="37.3" width="6" height="1" fill="#d8d8d8"/><rect x="444" y="37.3" width="8" height="1" fill="#d8d8d8"/><rect x="490" y="37.3" width="6" height="1" fill="#d8d8d8"/><rect x="528.5" y="37.3" width="5" height="1" fill="#d8d8d8"/></svg></body></html>
